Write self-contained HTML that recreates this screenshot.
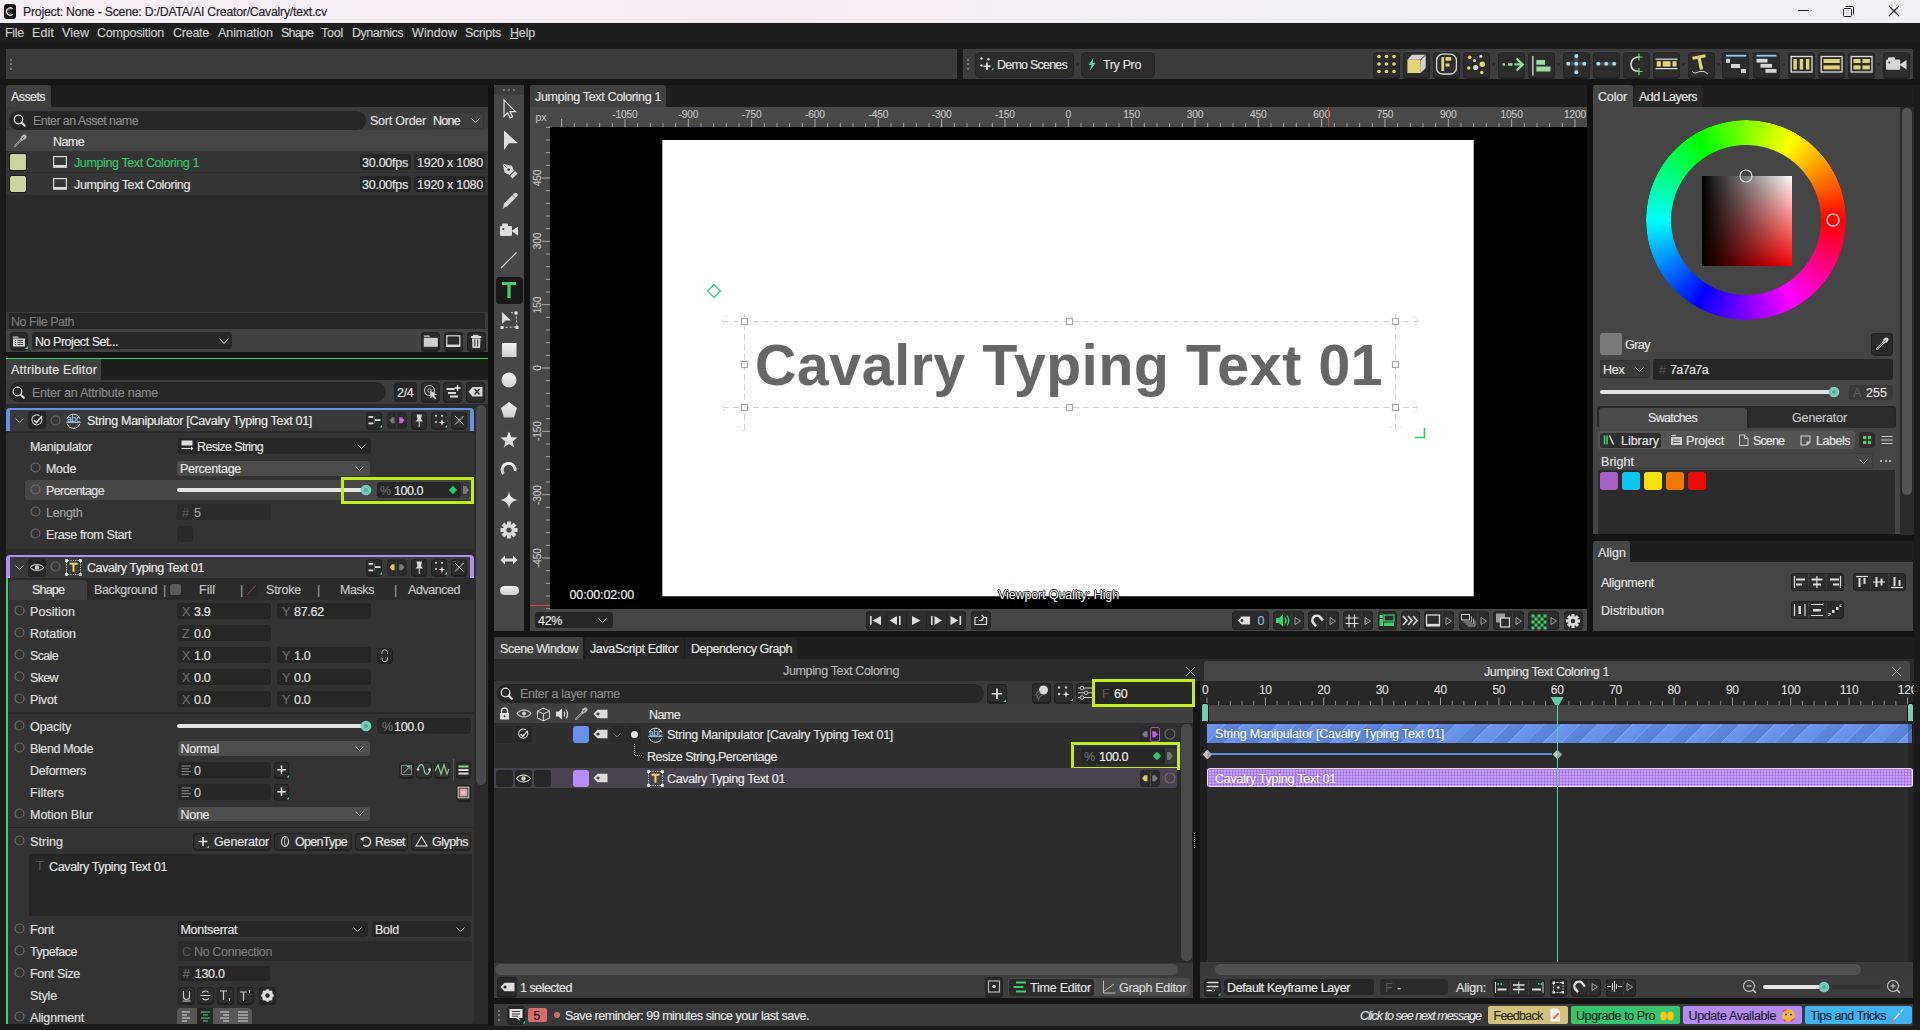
<!DOCTYPE html>
<html><head><meta charset="utf-8">
<style>
*{box-sizing:border-box}
html,body{margin:0;padding:0}
body{width:1920px;height:1030px;overflow:hidden;position:relative;background:#1b1b1b;font-family:"Liberation Sans",sans-serif;font-size:12.5px;letter-spacing:-0.3px;color:#dedede}
.a{position:absolute}
.t{position:absolute;white-space:nowrap;line-height:14px;height:14px;-webkit-text-stroke:0.15px currentColor}
.fld{position:absolute;background:#262626;border-radius:3px}
.btn{position:absolute;background:#2c2c2c;border:1px solid #222;border-radius:4px}
.dim{color:#8a8a8a}
svg{position:absolute;overflow:visible}
</style></head><body>

<!-- 01_base.py -->
<!-- TITLE BAR -->
<div class="a" style="left:0;top:0;width:1920px;height:23px;background:linear-gradient(90deg,#f4eef4 0%,#f6ebf4 40%,#f2eff6 70%,#f1f0f6 100%)"></div>
<div id="titlebar"></div>

<!-- MENU BAR -->
<div class="a" style="left:0;top:23px;width:1920px;height:19px;background:#1f1f1f"></div><div class="a" style="left:0;top:42px;width:1920px;height:7px;background:#1c1c1c"></div><div class="a" style="left:0;top:79px;width:1920px;height:6px;background:#151515"></div>
<div id="menubar"></div>

<!-- TOOLBARS -->
<div class="a" style="left:6px;top:49px;width:951px;height:30px;background:#3c3c3c"></div>
<div class="a" style="left:963px;top:49px;width:950px;height:30px;background:#3c3c3c"></div>
<div id="toolbar"></div>

<!-- LEFT PANEL: ASSETS -->
<div class="a" style="left:6px;top:85px;width:482px;height:267px;background:#1e1e1e"></div>
<div class="a" style="left:6px;top:85px;width:45px;height:22px;background:#404040;border-radius:3px 3px 0 0"></div>
<div class="a" style="left:6px;top:107px;width:482px;height:245px;background:#2b2b2b"></div>
<div id="assets"></div>

<div class="a" style="left:6px;top:352px;width:482px;height:6px;background:#131313"></div>
<!-- LEFT PANEL: ATTRIBUTE EDITOR -->
<div class="a" style="left:6px;top:358px;width:482px;height:2px;background:#3ecf6e"></div>
<div class="a" style="left:6px;top:359px;width:482px;height:665px;background:#1e1e1e"></div>
<div class="a" style="left:6px;top:359px;width:95px;height:21px;background:#3f3f3f"></div>
<div class="a" style="left:6px;top:380px;width:482px;height:644px;background:#2b2b2b"></div>
<div id="attr"></div>

<!-- TOOL STRIP -->
<div class="a" style="left:494px;top:85px;width:30px;height:546px;background:#474747"></div>
<div class="a" style="left:494px;top:85px;width:30px;height:10px;background:#3d3d3d"></div>
<div id="tools"></div>

<!-- VIEWPORT -->
<div class="a" style="left:530px;top:85px;width:1057px;height:546px;background:#1e1e1e"></div>
<div class="a" style="left:530px;top:85px;width:136px;height:22px;background:#404040;border-radius:3px 3px 0 0"></div>
<div class="a" style="left:530px;top:107px;width:1057px;height:20px;background:#484848"></div>
<div class="a" style="left:530px;top:107px;width:20px;height:502px;background:#484848"></div>
<div class="a" style="left:550px;top:127px;width:1037px;height:482px;background:#000"></div>
<div class="a" style="left:662px;top:140px;width:812px;height:456px;background:#fff;box-shadow:inset 1px 0 0 #a8a8a8, inset -1px 0 0 #b8b8b8"></div><div class="a" style="left:662px;top:596px;width:812px;height:1px;background:#404040"></div>
<div class="a" style="left:530px;top:609px;width:1057px;height:22px;background:#474747"></div>
<div id="viewport"></div>

<!-- RIGHT PANEL -->
<div class="a" style="left:1593px;top:85px;width:320px;height:449px;background:#1e1e1e"></div>
<div class="a" style="left:1593px;top:85px;width:40px;height:22px;background:#454545;border-radius:3px 3px 0 0"></div>
<div class="a" style="left:1634px;top:85px;width:69px;height:22px;background:#262626;border-radius:3px 3px 0 0"></div>
<div class="a" style="left:1593px;top:107px;width:320px;height:427px;background:#454545"></div>
<div id="color"></div>
<div class="a" style="left:1593px;top:541px;width:320px;height:90px;background:#1e1e1e"></div>
<div class="a" style="left:1593px;top:541px;width:37px;height:21px;background:#454545;border-radius:3px 3px 0 0"></div>
<div class="a" style="left:1593px;top:562px;width:320px;height:69px;background:#454545"></div>
<div id="align"></div>

<!-- SCENE WINDOW -->
<div class="a" style="left:494px;top:637px;width:1420px;height:22px;background:#1e1e1e"></div><div class="a" style="left:494px;top:659px;width:1420px;height:22px;background:#2b2b2b"></div>
<div class="a" style="left:494px;top:637px;width:89px;height:22px;background:#3f3f3f;border-radius:3px 3px 0 0"></div>

<div class="a" style="left:494px;top:681px;width:699px;height:23px;background:#3a3a3a"></div>
<div class="a" style="left:494px;top:704px;width:699px;height:19px;background:#404040"></div>
<div class="a" style="left:494px;top:723px;width:699px;height:240px;background:#2b2b2b"></div>
<div class="a" style="left:494px;top:963px;width:699px;height:13px;background:#3a3a3a"></div>
<div class="a" style="left:494px;top:976px;width:699px;height:22px;background:#3c3c3c"></div>
<div id="scene"></div>

<!-- TIMELINE -->

<div class="a" style="left:1204px;top:661px;width:706px;height:20px;background:#454545;border-radius:4px 4px 0 0"></div>
<div class="a" style="left:1200px;top:681px;width:713px;height:24px;background:#262626"></div>
<div class="a" style="left:1200px;top:705px;width:714px;height:16px;background:#1f1f1f"></div><div class="a" style="left:1207px;top:705px;width:700px;height:16px;background:#464646"></div>
<div class="a" style="left:1207px;top:721px;width:706px;height:241px;background:#2b2b2b"></div>
<div class="a" style="left:1200px;top:962px;width:713px;height:14px;background:#3a3a3a"></div>
<div class="a" style="left:1200px;top:976px;width:713px;height:22px;background:#3c3c3c"></div>
<div id="timeline"></div>

<div class="a" style="left:494px;top:998px;width:1420px;height:6px;background:#141414"></div>
<div class="a" style="left:1593px;top:534px;width:321px;height:7px;background:#141414"></div>
<div class="a" style="left:488px;top:85px;width:6px;height:941px;background:#121212"></div>
<div class="a" style="left:524px;top:85px;width:6px;height:546px;background:#121212"></div>
<div class="a" style="left:1587px;top:85px;width:6px;height:546px;background:#121212"></div>
<div class="a" style="left:494px;top:631px;width:1420px;height:6px;background:#141414"></div>
<div class="a" style="left:1193px;top:681px;width:7px;height:317px;background:#161616"></div>
<!-- STATUS BAR -->
<div class="a" style="left:494px;top:1004px;width:1419px;height:22px;background:#3a3a3a"></div>
<div id="status"></div>


<!-- 10_title.py -->
<div class="a" style="left:4px;top:4px;width:12px;height:15px;background:#111;border-radius:3px;"></div>
<svg style="left:4px;top:4px;" width="12" height="15" viewBox="0 0 12 15"><path d="M8.6 4.8 A3.6 3.6 0 1 0 8.6 10.2" fill="none" stroke="#ddd" stroke-width="1.3"/><path d="M7.6 6.2 A1.9 1.9 0 1 0 7.6 8.8" fill="none" stroke="#888" stroke-width="0.8"/></svg>
<div class="t" style="left:23px;top:5px;font-size:12.3px;color:#1c1c1c;letter-spacing:-0.235px;">Project: None - Scene: D:/DATA/AI Creator/Cavalry/text.cv</div>
<div class="a" style="left:1798px;top:10px;width:11px;height:1px;background:#222;"></div>
<svg style="left:1840px;top:3px;" width="16" height="16" viewBox="0 0 16 16"><rect x="3.5" y="5.5" width="8" height="8" rx="1" fill="none" stroke="#222" stroke-width="1"/><path d="M5.5 3.5 H12.5 A1 1 0 0 1 13.5 4.5 V11.5" fill="none" stroke="#222" stroke-width="1"/></svg>
<svg style="left:1886px;top:3px;" width="16" height="16" viewBox="0 0 16 16"><path d="M3 3 L13 13 M13 3 L3 13" stroke="#222" stroke-width="1.2"/></svg>
<!-- 11_menu.py -->
<div class="t" style="left:5px;top:26px;font-size:12.5px;color:#cfcfcf;letter-spacing:-0.285px;">File</div>
<div class="t" style="left:32px;top:26px;font-size:12.5px;color:#cfcfcf;letter-spacing:0.115px;">Edit</div>
<div class="t" style="left:62px;top:26px;font-size:12.5px;color:#cfcfcf;letter-spacing:0.033px;">View</div>
<div class="t" style="left:97px;top:26px;font-size:12.5px;color:#cfcfcf;letter-spacing:-0.225px;">Composition</div>
<div class="t" style="left:173px;top:26px;font-size:12.5px;color:#cfcfcf;letter-spacing:-0.253px;">Create</div>
<div class="t" style="left:218px;top:26px;font-size:12.5px;color:#cfcfcf;letter-spacing:-0.065px;">Animation</div>
<div class="t" style="left:281px;top:26px;font-size:12.5px;color:#cfcfcf;letter-spacing:-0.829px;">Shape</div>
<div class="t" style="left:321px;top:26px;font-size:12.5px;color:#cfcfcf;letter-spacing:-0.232px;">Tool</div>
<div class="t" style="left:352px;top:26px;font-size:12.5px;color:#cfcfcf;letter-spacing:-0.484px;">Dynamics</div>
<div class="t" style="left:412px;top:26px;font-size:12.5px;color:#cfcfcf;letter-spacing:0.09px;">Window</div>
<div class="t" style="left:465px;top:26px;font-size:12.5px;color:#cfcfcf;letter-spacing:-0.314px;">Scripts</div>
<div class="t" style="left:510px;top:26px;font-size:12.5px;color:#cfcfcf;letter-spacing:-0.177px;">Help</div>
<div class="a" style="left:510px;top:38px;width:8px;height:1px;background:#cfcfcf;"></div>
<!-- 12_toolbar.py -->
<div class="a" style="left:10px;top:58.5px;width:2px;height:2px;background:#8a8a8a;border-radius:1px;"></div>
<div class="a" style="left:967px;top:58.5px;width:2px;height:2px;background:#8a8a8a;border-radius:1px;"></div>
<div class="a" style="left:10px;top:63px;width:2px;height:2px;background:#8a8a8a;border-radius:1px;"></div>
<div class="a" style="left:967px;top:63px;width:2px;height:2px;background:#8a8a8a;border-radius:1px;"></div>
<div class="a" style="left:10px;top:67.5px;width:2px;height:2px;background:#8a8a8a;border-radius:1px;"></div>
<div class="a" style="left:967px;top:67.5px;width:2px;height:2px;background:#8a8a8a;border-radius:1px;"></div>
<div class="a" style="left:974.5px;top:51px;width:99px;height:27px;background:#2c2c2c;border-radius:5px;border-top:1px solid #4a4a4a;box-shadow:inset 0 0 0 1px #252525;"></div>
<svg style="left:979px;top:56px;" width="16" height="18" viewBox="0 0 16 18"><circle cx="2.5" cy="2.5" r="1.2" fill="#ddd"/><circle cx="9.5" cy="3.2" r="1.2" fill="#ddd"/><circle cx="2.5" cy="9.5" r="1.2" fill="#ddd"/><path d="M8 6.5 V14 M4.5 10.2 H11.5" stroke="#eee" stroke-width="1.6"/><path d="M12 14 L14.5 11.5 V14 Z" fill="#5ec9a9"/></svg>
<div class="t" style="left:997px;top:58px;font-size:12.5px;color:#e0e0e0;letter-spacing:-0.773px;">Demo Scenes</div>
<div class="a" style="left:1076px;top:63px;width:3px;height:3px;background:#2a2a2a;border-radius:2px;"></div>
<div class="a" style="left:1081px;top:51px;width:74px;height:27px;background:#2c2c2c;border-radius:5px;border-top:1px solid #4a4a4a;box-shadow:inset 0 0 0 1px #252525;"></div>
<svg style="left:1087px;top:57px;" width="10" height="16" viewBox="0 0 10 16"><path d="M6.5 0.5 L1.5 8 H4.5 L2.5 14.5 L8.5 6 H5.5 Z" fill="#5ec9a9"/></svg>
<div class="t" style="left:1103px;top:58px;font-size:12.5px;color:#e0e0e0;letter-spacing:-0.358px;">Try Pro</div>
<div class="a" style="left:1372.5px;top:51px;width:27px;height:27px;background:#2c2c2c;border-radius:4px;border-top:1px solid #4a4a4a;box-shadow:0 1px 0 #1f1f1f, inset 0 0 0 1px #252525;"></div>
<div class="a" style="left:1402.5px;top:51px;width:27px;height:27px;background:#2c2c2c;border-radius:4px;border-top:1px solid #4a4a4a;box-shadow:0 1px 0 #1f1f1f, inset 0 0 0 1px #252525;"></div>
<div class="a" style="left:1432.5px;top:51px;width:27px;height:27px;background:#2c2c2c;border-radius:4px;border-top:1px solid #4a4a4a;box-shadow:0 1px 0 #1f1f1f, inset 0 0 0 1px #252525;"></div>
<div class="a" style="left:1462.5px;top:51px;width:27px;height:27px;background:#2c2c2c;border-radius:4px;border-top:1px solid #4a4a4a;box-shadow:0 1px 0 #1f1f1f, inset 0 0 0 1px #252525;"></div>
<div class="a" style="left:1497.5px;top:51px;width:27px;height:27px;background:#2c2c2c;border-radius:4px;border-top:1px solid #4a4a4a;box-shadow:0 1px 0 #1f1f1f, inset 0 0 0 1px #252525;"></div>
<div class="a" style="left:1527.5px;top:51px;width:27px;height:27px;background:#2c2c2c;border-radius:4px;border-top:1px solid #4a4a4a;box-shadow:0 1px 0 #1f1f1f, inset 0 0 0 1px #252525;"></div>
<div class="a" style="left:1562.5px;top:51px;width:27px;height:27px;background:#2c2c2c;border-radius:4px;border-top:1px solid #4a4a4a;box-shadow:0 1px 0 #1f1f1f, inset 0 0 0 1px #252525;"></div>
<div class="a" style="left:1592.5px;top:51px;width:27px;height:27px;background:#2c2c2c;border-radius:4px;border-top:1px solid #4a4a4a;box-shadow:0 1px 0 #1f1f1f, inset 0 0 0 1px #252525;"></div>
<div class="a" style="left:1622.5px;top:51px;width:27px;height:27px;background:#2c2c2c;border-radius:4px;border-top:1px solid #4a4a4a;box-shadow:0 1px 0 #1f1f1f, inset 0 0 0 1px #252525;"></div>
<div class="a" style="left:1652.5px;top:51px;width:27px;height:27px;background:#2c2c2c;border-radius:4px;border-top:1px solid #4a4a4a;box-shadow:0 1px 0 #1f1f1f, inset 0 0 0 1px #252525;"></div>
<div class="a" style="left:1687.5px;top:51px;width:27px;height:27px;background:#2c2c2c;border-radius:4px;border-top:1px solid #4a4a4a;box-shadow:0 1px 0 #1f1f1f, inset 0 0 0 1px #252525;"></div>
<div class="a" style="left:1722px;top:51px;width:27px;height:27px;background:#2c2c2c;border-radius:4px;border-top:1px solid #4a4a4a;box-shadow:0 1px 0 #1f1f1f, inset 0 0 0 1px #252525;"></div>
<div class="a" style="left:1752.5px;top:51px;width:27px;height:27px;background:#2c2c2c;border-radius:4px;border-top:1px solid #4a4a4a;box-shadow:0 1px 0 #1f1f1f, inset 0 0 0 1px #252525;"></div>
<div class="a" style="left:1787.5px;top:51px;width:27px;height:27px;background:#2c2c2c;border-radius:4px;border-top:1px solid #4a4a4a;box-shadow:0 1px 0 #1f1f1f, inset 0 0 0 1px #252525;"></div>
<div class="a" style="left:1817.5px;top:51px;width:27px;height:27px;background:#2c2c2c;border-radius:4px;border-top:1px solid #4a4a4a;box-shadow:0 1px 0 #1f1f1f, inset 0 0 0 1px #252525;"></div>
<div class="a" style="left:1847.5px;top:51px;width:27px;height:27px;background:#2c2c2c;border-radius:4px;border-top:1px solid #4a4a4a;box-shadow:0 1px 0 #1f1f1f, inset 0 0 0 1px #252525;"></div>
<div class="a" style="left:1882.5px;top:51px;width:27px;height:27px;background:#2c2c2c;border-radius:4px;border-top:1px solid #4a4a4a;box-shadow:0 1px 0 #1f1f1f, inset 0 0 0 1px #252525;"></div>
<div class="a" style="left:1492px;top:63px;width:3px;height:3px;background:#2a2a2a;border-radius:2px;"></div>
<div class="a" style="left:1556.8px;top:63px;width:3px;height:3px;background:#2a2a2a;border-radius:2px;"></div>
<div class="a" style="left:1681.5px;top:63px;width:3px;height:3px;background:#2a2a2a;border-radius:2px;"></div>
<div class="a" style="left:1716.5px;top:63px;width:3px;height:3px;background:#2a2a2a;border-radius:2px;"></div>
<div class="a" style="left:1781.5px;top:63px;width:3px;height:3px;background:#2a2a2a;border-radius:2px;"></div>
<div class="a" style="left:1877.1px;top:63px;width:3px;height:3px;background:#2a2a2a;border-radius:2px;"></div>
<svg style="left:1372.5px;top:51px;" width="27" height="27" viewBox="0 0 27 27"><circle cx="6" cy="5.5" r="1.8" fill="#e3d574"/><circle cx="6" cy="13" r="1.8" fill="#e3d574"/><circle cx="6" cy="20.5" r="1.8" fill="#e3d574"/><circle cx="13.5" cy="5.5" r="1.8" fill="#e3d574"/><circle cx="13.5" cy="13" r="1.8" fill="#e3d574"/><circle cx="13.5" cy="20.5" r="1.8" fill="#e3d574"/><circle cx="21" cy="5.5" r="1.8" fill="#e3d574"/><circle cx="21" cy="13" r="1.8" fill="#e3d574"/><circle cx="21" cy="20.5" r="1.8" fill="#e3d574"/></svg>
<svg style="left:1402.5px;top:51px;" width="27" height="27" viewBox="0 0 27 27"><path d="M4.4 8.8 L9 3.8 H22.7 L17.6 8.8 Z" fill="#d4d4d4"/><path d="M17.6 8.8 L22.7 3.8 V17 L17.6 22 Z" fill="#d4d4d4"/><rect x="4.4" y="8.8" width="13.2" height="13.2" fill="#e3d574"/><path d="M17.6 8.8 L22.7 3.8" stroke="#2c2c2c" stroke-width="0.8"/></svg>
<svg style="left:1432.5px;top:51px;" width="27" height="27" viewBox="0 0 27 27"><rect x="3.6" y="3.2" width="19.8" height="19.8" rx="6" fill="none" stroke="#d6d6d6" stroke-width="1.3"/><rect x="8.4" y="6.1" width="2.7" height="13.9" fill="#e3d574"/><rect x="12.5" y="6.1" width="5.7" height="3.6" fill="#e3d574"/><rect x="12.5" y="12.5" width="4" height="3" fill="#e3d574"/></svg>
<svg style="left:1462.5px;top:51px;" width="27" height="27" viewBox="0 0 27 27"><circle cx="6.7" cy="6.3" r="1.7" fill="#e3d574"/><circle cx="5.8" cy="17" r="1.7" fill="#e3d574"/><circle cx="19.3" cy="13.3" r="2.7" fill="#e3d574"/><circle cx="18.8" cy="21.5" r="1.7" fill="#e3d574"/><circle cx="17.8" cy="5.2" r="1.5" fill="#d8d8d8"/><circle cx="11.5" cy="9.5" r="1.6" fill="#d8d8d8"/><circle cx="12.7" cy="16.5" r="2.6" fill="#d8d8d8"/></svg>
<svg style="left:1497.5px;top:51px;" width="27" height="27" viewBox="0 0 27 27"><rect x="4.5" y="12.2" width="2.5" height="2.5" fill="#8fd89a"/><rect x="10" y="12.2" width="4.5" height="2.5" fill="#8fd89a"/><path d="M16.5 13.45 H24.5 M18.5 7.5 L24.8 13.45 L18.5 19.5" fill="none" stroke="#8fd89a" stroke-width="2.3"/></svg>
<svg style="left:1527.5px;top:51px;" width="27" height="27" viewBox="0 0 27 27"><rect x="4.2" y="5" width="1.3" height="19.5" fill="#ddd"/><rect x="8.3" y="9" width="8.7" height="4.8" fill="#9bdb9b"/><rect x="8.3" y="15.5" width="14.2" height="5" fill="#9bdb9b"/></svg>
<svg style="left:1562.5px;top:51px;" width="27" height="27" viewBox="0 0 27 27"><path d="M13.3 5 V21 M5.2 12.8 H21.3" stroke="#4a4a4a" stroke-width="3.5"/><circle cx="13.3" cy="4.9" r="2" fill="#a8d8f8"/><circle cx="5.2" cy="12.8" r="2" fill="#a8d8f8"/><circle cx="13.3" cy="12.8" r="2" fill="#a8d8f8"/><circle cx="21.3" cy="12.8" r="2" fill="#a8d8f8"/><circle cx="13.3" cy="21.2" r="2" fill="#a8d8f8"/></svg>
<svg style="left:1592.5px;top:51px;" width="27" height="27" viewBox="0 0 27 27"><path d="M5.2 12.8 H21.3" stroke="#4a4a4a" stroke-width="3.5"/><circle cx="5.2" cy="12.8" r="2" fill="#a8d8f8"/><circle cx="13.2" cy="12.8" r="2" fill="#a8d8f8"/><circle cx="21.2" cy="12.8" r="2" fill="#a8d8f8"/></svg>
<svg style="left:1622.5px;top:51px;" width="27" height="27" viewBox="0 0 27 27"><path d="M16.5 6 C10 6 8 10 8 13.3 C8 17 10 20.5 16.5 20.5" fill="none" stroke="#d8d8d8" stroke-width="1.6"/><path d="M16 2.5 V9.5 M13 6 H19.5 M16 17 V24 M13 20.5 H19.5" stroke="#7cc98a" stroke-width="1.2"/></svg>
<svg style="left:1652.5px;top:51px;" width="27" height="27" viewBox="0 0 27 27"><rect x="2.6" y="7.6" width="21.9" height="1.2" fill="#ddd"/><rect x="2.6" y="17" width="21.9" height="1.2" fill="#ddd"/><rect x="3.8" y="10.2" width="4" height="5.4" fill="#e3d574"/><rect x="9.7" y="10.2" width="7.8" height="5.4" fill="#e3d574"/><rect x="19.5" y="10.2" width="4" height="5.4" fill="#e3d574"/></svg>
<svg style="left:1687.5px;top:51px;" width="27" height="27" viewBox="0 0 27 27"><path d="M4.5 7.2 L17.5 4.8" stroke="#e3d574" stroke-width="3.2"/><path d="M10.8 6.2 L13.6 18.5" stroke="#e3d574" stroke-width="3.3"/><path d="M4.3 20.5 C7 23.5 9 21 12 20.5 C15 20 17 20.5 19.8 23" fill="none" stroke="#ddd" stroke-width="1"/></svg>
<svg style="left:1722px;top:51px;" width="27" height="27" viewBox="0 0 27 27"><rect x="3.9" y="3.8" width="20.3" height="1.8" fill="#8fd0f5"/><rect x="4" y="7.8" width="4" height="4" fill="#d4d4d4"/><rect x="9" y="13" width="9" height="4" fill="#d4d4d4"/><rect x="19" y="18" width="5" height="4" fill="#d4d4d4"/></svg>
<svg style="left:1752.5px;top:51px;" width="27" height="27" viewBox="0 0 27 27"><rect x="3.5" y="3.8" width="20" height="1.8" fill="#8fd0f5"/><rect x="3.5" y="7.8" width="11" height="3.8" fill="#d4d4d4"/><rect x="7.5" y="12.9" width="11.5" height="3.8" fill="#d4d4d4"/><rect x="12.5" y="18" width="11" height="3.8" fill="#d4d4d4"/></svg>
<svg style="left:1787.5px;top:51px;" width="27" height="27" viewBox="0 0 27 27"><rect x="3.2" y="5.5" width="20.8" height="15.5" fill="none" stroke="#ddd" stroke-width="1.3"/><rect x="5.4" y="8" width="3.4" height="10.5" fill="#e3d574"/><rect x="11.7" y="8" width="3.4" height="10.5" fill="#e3d574"/><rect x="18" y="8" width="3.4" height="10.5" fill="#e3d574"/></svg>
<svg style="left:1817.5px;top:51px;" width="27" height="27" viewBox="0 0 27 27"><rect x="3.2" y="5.5" width="20.8" height="15.5" fill="none" stroke="#ddd" stroke-width="1.3"/><rect x="5.5" y="8" width="16.3" height="4" fill="#e3d574"/><rect x="5.5" y="14.4" width="16.3" height="4" fill="#e3d574"/></svg>
<svg style="left:1847.5px;top:51px;" width="27" height="27" viewBox="0 0 27 27"><rect x="3.2" y="5.5" width="20.8" height="15.5" fill="none" stroke="#ddd" stroke-width="1.3"/><rect x="5.5" y="8" width="7" height="4" fill="#e3d574"/><rect x="14.5" y="8" width="7.3" height="4" fill="#e3d574"/><rect x="5.5" y="14.4" width="7" height="4" fill="#e3d574"/><rect x="14.5" y="14.4" width="7.3" height="4" fill="#e3d574"/></svg>
<svg style="left:1882.5px;top:51px;" width="27" height="27" viewBox="0 0 27 27"><rect x="3" y="8.6" width="14.2" height="10.2" rx="1" fill="#d8d8d8"/><rect x="5" y="6.2" width="7" height="3" rx="1" fill="#d8d8d8"/><path d="M16.5 13.7 L23.5 9 V18.4 Z" fill="#d8d8d8"/><circle cx="6.3" cy="11.6" r="1" fill="#333"/></svg>
<!-- 20_assets.py -->
<div class="t" style="left:11px;top:89.5px;font-size:12.5px;color:#e6e6e6;letter-spacing:-0.585px;">Assets</div>
<div class="a" style="left:6px;top:107px;width:482px;height:23px;background:#3c3c3c;"></div>
<div class="a" style="left:9px;top:111px;width:357px;height:19px;background:#262626;border-radius:10px 10px 10px 10px;"></div>
<svg style="left:13px;top:114px;" width="14" height="14" viewBox="0 0 14 14"><g transform="scale(1)"><circle cx="5.5" cy="5.5" r="4.3" fill="none" stroke="#e0e0e0" stroke-width="1.3"/><path d="M8.7 8.7 L11.8 11.8" stroke="#e0e0e0" stroke-width="2" stroke-linecap="round"/></g></svg>
<div class="t" style="left:33px;top:114px;font-size:12.5px;color:#8a8a8a;letter-spacing:-0.581px;">Enter an Asset name</div>
<div class="t" style="left:370px;top:114px;font-size:12.5px;color:#e0e0e0;letter-spacing:-0.235px;">Sort Order</div>
<div class="a" style="left:430px;top:112px;width:54px;height:17px;background:#3e3e3e;border-radius:3px;box-shadow:inset 0 0 0 1px #353535;"></div>
<div class="t" style="left:433px;top:114px;font-size:12.5px;color:#e6e6e6;letter-spacing:-0.72px;">None</div>
<svg style="left:471px;top:118px;" width="9" height="5" viewBox="0 0 9 5"><path d="M0.5 0.5 L4.5 4.5 L8.5 0.5" fill="none" stroke="#cfcfcf" stroke-width="1"/></svg>
<div class="a" style="left:6px;top:130px;width:482px;height:21px;background:#454545;"></div>
<svg style="left:13px;top:134px;" width="14" height="14" viewBox="0 0 14 14"><path d="M2 12 L8.5 5.5" stroke="#aaa" stroke-width="1.8" stroke-linecap="round"/><path d="M2 12 L8.5 5.5" stroke="#454545" stroke-width="0.6"/><path d="M7.5 4.5 L9.5 6.5 M8.5 3.5 L11 1.5 A1.2 1.2 0 0 1 12.5 3 L10.5 5.5" stroke="#bbb" stroke-width="2" fill="none"/></svg>
<div class="t" style="left:53px;top:135px;font-size:12.5px;color:#e8e8e8;letter-spacing:-0.585px;">Name</div>
<div class="a" style="left:6px;top:151px;width:482px;height:22px;background:#353535;"></div>
<div class="a" style="left:10px;top:154px;width:16px;height:16px;background:#cad3a1;border-radius:2px;box-shadow:0 0 0 1px #1a1a1a;"></div>
<svg style="left:53px;top:156px;" width="14" height="12" viewBox="0 0 14 12"><rect x="0.6" y="0.6" width="12.8" height="9" fill="none" stroke="#dcdcdc" stroke-width="1.2"/><rect x="0" y="9.5" width="14" height="2.3" fill="#dcdcdc"/></svg>
<div class="t" style="left:74px;top:156px;font-size:12.5px;color:#3dc46e;letter-spacing:-0.385px;">Jumping Text Coloring 1</div>
<div class="a" style="left:360px;top:154px;width:51px;height:16px;background:#262626;border-radius:3px;"></div>
<div class="t" style="left:362px;top:155.5px;font-size:12.5px;color:#e6e6e6;letter-spacing:-0.244px;">30.00fps</div>
<div class="a" style="left:414px;top:154px;width:71px;height:16px;background:#262626;border-radius:3px;"></div>
<div class="t" style="left:417px;top:155.5px;font-size:12.5px;color:#e6e6e6;letter-spacing:-0.255px;">1920 x 1080</div>
<div class="a" style="left:6px;top:173px;width:482px;height:22px;background:#353535;"></div>
<div class="a" style="left:10px;top:176px;width:16px;height:16px;background:#cad3a1;border-radius:2px;box-shadow:0 0 0 1px #1a1a1a;"></div>
<svg style="left:53px;top:178px;" width="14" height="12" viewBox="0 0 14 12"><rect x="0.6" y="0.6" width="12.8" height="9" fill="none" stroke="#dcdcdc" stroke-width="1.2"/><rect x="0" y="9.5" width="14" height="2.3" fill="#dcdcdc"/></svg>
<div class="t" style="left:74px;top:178px;font-size:12.5px;color:#e4e4e4;letter-spacing:-0.354px;">Jumping Text Coloring</div>
<div class="a" style="left:360px;top:176px;width:51px;height:16px;background:#262626;border-radius:3px;"></div>
<div class="t" style="left:362px;top:177.5px;font-size:12.5px;color:#e6e6e6;letter-spacing:-0.244px;">30.00fps</div>
<div class="a" style="left:414px;top:176px;width:71px;height:16px;background:#262626;border-radius:3px;"></div>
<div class="t" style="left:417px;top:177.5px;font-size:12.5px;color:#e6e6e6;letter-spacing:-0.255px;">1920 x 1080</div>
<div class="a" style="left:6px;top:172px;width:482px;height:1px;background:#2f2f2f;"></div>
<div class="a" style="left:6px;top:312px;width:482px;height:40px;background:#3a3a3a;"></div>
<div class="a" style="left:9px;top:313px;width:476px;height:16px;background:#262626;"></div>
<div class="t" style="left:11px;top:314.5px;font-size:12.5px;color:#7c7c7c;letter-spacing:-0.481px;">No File Path</div>
<div class="a" style="left:6px;top:329px;width:482px;height:23px;background:#434343;"></div>
<div class="a" style="left:10px;top:332px;width:18px;height:18px;background:#2a2a2a;border-radius:4px;box-shadow:inset 0 0 0 1px #222, 0 1px 0 #222;"></div>
<svg style="left:12px;top:335px;" width="14" height="12" viewBox="0 0 14 12"><path d="M1 1.5 H6 L7 2.8 H1 Z" fill="#ccc"/><rect x="1" y="3.5" width="12" height="8" fill="#d0d0d0"/><path d="M3 5.5 H4 M5.5 5.5 H11 M3 7.5 H4 M5.5 7.5 H11 M3 9.5 H4 M5.5 9.5 H11" stroke="#333" stroke-width="0.9"/></svg>
<svg style="left:25px;top:346px;" width="3" height="3" viewBox="0 0 3 3"><path d="M0 3 L3 0 V3 Z" fill="#5ec9a9"/></svg>
<div class="a" style="left:32px;top:332px;width:200px;height:17px;background:#262626;border-radius:3px;"></div>
<div class="t" style="left:35px;top:334.5px;font-size:12.5px;color:#ececec;letter-spacing:-0.471px;">No Project Set...</div>
<svg style="left:219px;top:338px;" width="10" height="6" viewBox="0 0 10 6"><path d="M0.5 0.5 L5 5.5 L9.5 0.5" fill="none" stroke="#cfcfcf" stroke-width="1"/></svg>
<div class="a" style="left:420.5px;top:331.5px;width:19px;height:19px;background:#2a2a2a;border-radius:4px;box-shadow:inset 0 0 0 1px #222, 0 1px 0 #222;"></div>
<div class="a" style="left:443.5px;top:331.5px;width:19px;height:19px;background:#2a2a2a;border-radius:4px;box-shadow:inset 0 0 0 1px #222, 0 1px 0 #222;"></div>
<div class="a" style="left:466.5px;top:331.5px;width:19px;height:19px;background:#2a2a2a;border-radius:4px;box-shadow:inset 0 0 0 1px #222, 0 1px 0 #222;"></div>
<svg style="left:423px;top:334px;" width="14" height="14" viewBox="0 0 14 14"><path d="M0.8 1.5 H6 L7.2 2.8 H0.8 Z" fill="#ddd"/><rect x="0.8" y="3.8" width="14" height="9" fill="#cfcfcf"/></svg>
<svg style="left:446px;top:334px;" width="14" height="14" viewBox="0 0 14 14"><rect x="0.8" y="1.8" width="13" height="9.5" fill="none" stroke="#ddd" stroke-width="1.2"/><rect x="0.2" y="10.8" width="14.2" height="2.2" fill="#ddd"/></svg>
<svg style="left:469px;top:334px;" width="14" height="14" viewBox="0 0 14 14"><rect x="4" y="0.8" width="5.5" height="1.5" fill="#ccc"/><rect x="2.2" y="2" width="10" height="2" fill="#ddd"/><path d="M3 4.5 H11.5 L11 14 H3.5 Z" fill="#d6d6d6"/><path d="M5.8 5.5 V12.5 M8.7 5.5 V12.5" stroke="#2a2a2a" stroke-width="1"/></svg>
<!-- 21_attr.py -->
<div class="t" style="left:11px;top:363px;font-size:12.5px;color:#e6e6e6;letter-spacing:0.208px;">Attribute Editor</div>
<div class="a" style="left:6px;top:380px;width:482px;height:24px;background:#3c3c3c;"></div>
<div class="a" style="left:9px;top:382px;width:377px;height:20px;background:#262626;border-radius:10px;"></div>
<svg style="left:12px;top:386px;" width="14" height="14" viewBox="0 0 14 14"><g transform="scale(1)"><circle cx="5.5" cy="5.5" r="4.3" fill="none" stroke="#e0e0e0" stroke-width="1.3"/><path d="M8.7 8.7 L11.8 11.8" stroke="#e0e0e0" stroke-width="2" stroke-linecap="round"/></g></svg>
<div class="t" style="left:32px;top:386px;font-size:12.5px;color:#8a8a8a;letter-spacing:-0.231px;">Enter an Attribute name</div>
<div class="a" style="left:394px;top:382px;width:23px;height:19.5px;background:#262626;border-radius:3px;"></div>
<div class="t" style="left:397px;top:386px;color:#e6e6e6;">2/4</div>
<div class="a" style="left:420.5px;top:382px;width:19px;height:19.5px;background:#2c2c2c;border-radius:4px;box-shadow:inset 0 0 0 1px #222, 0 1px 0 #222;"></div>
<div class="a" style="left:443px;top:382px;width:19px;height:19.5px;background:#2c2c2c;border-radius:4px;box-shadow:inset 0 0 0 1px #222, 0 1px 0 #222;"></div>
<div class="a" style="left:465.5px;top:382px;width:19px;height:19.5px;background:#2c2c2c;border-radius:4px;box-shadow:inset 0 0 0 1px #222, 0 1px 0 #222;"></div>
<svg style="left:420.5px;top:382px;" width="19" height="19.5" viewBox="0 0 19 19.5"><circle cx="8.5" cy="8.5" r="5" fill="none" stroke="#bbb" stroke-width="1.1"/><circle cx="8.5" cy="8.5" r="1.8" fill="none" stroke="#bbb" stroke-width="1"/><path d="M9 8.5 L16 12.5 L13 13.5 L15.5 16.5 L14 17.5 L11.5 14.5 L9.5 16.5 Z" fill="#d0d0d0"/></svg>
<svg style="left:443px;top:382px;" width="19" height="19.5" viewBox="0 0 19 19.5"><rect x="3.5" y="6" width="8" height="2" fill="#ddd"/><rect x="5" y="10" width="8" height="2" fill="#ddd"/><rect x="7" y="13.5" width="8" height="2" fill="#ddd"/><path d="M14.5 3 V9 M11.5 6 H17.5" stroke="#eee" stroke-width="1.3"/></svg>
<svg style="left:465.5px;top:382px;" width="19" height="19.5" viewBox="0 0 19 19.5"><path d="M2.5 9.75 L6.5 5 H16.5 V14.5 H6.5 Z" fill="#d6d6d6"/><path d="M8.5 7 L13.5 12.5 M13.5 7 L8.5 12.5" stroke="#2a2a2a" stroke-width="1.5"/></svg>
<div class="a" style="left:476px;top:405px;width:10px;height:380px;background:#4a4a4a;border-radius:5px;"></div>
<div class="a" style="left:6px;top:408px;width:468px;height:23px;background:#6b8fe8;border-radius:4px 4px 0 0;"></div>
<div class="a" style="left:10px;top:410px;width:460px;height:21px;background:#393939;"></div>
<svg style="left:15px;top:418px;" width="9" height="5" viewBox="0 0 9 5"><path d="M0.5 0.5 L4.5 4.5 L8.5 0.5" fill="none" stroke="#aaa" stroke-width="1"/></svg>
<div class="a" style="left:28px;top:411px;width:18px;height:18px;background:#262626;border-radius:3px;"></div>
<svg style="left:28px;top:411px;" width="18" height="18" viewBox="0 0 18 18"><path d="M13.3 6.5 A5 5 0 1 1 11.5 4.6" fill="none" stroke="#ccc" stroke-width="1.1"/><path d="M6 9 L8.5 11.5 L14 5" fill="none" stroke="#ddd" stroke-width="1.6"/></svg>
<svg style="left:49.5px;top:414.9px;" width="11" height="11" viewBox="0 0 11 11"><circle cx="5.5" cy="5.5" r="4.5" fill="none" stroke="#666" stroke-width="1.2"/></svg>
<svg style="left:65px;top:412px;" width="17" height="17" viewBox="0 0 17 17"><path d="M2.2 6.5 A6.8 6.8 0 0 1 14.8 6.5" fill="none" stroke="#dcdcdc" stroke-width="1"/><path d="M2.2 12 A6.8 6.8 0 0 0 14.8 12" fill="none" stroke="#dcdcdc" stroke-width="1"/><text x="8.5" y="10.3" font-size="8.8" fill="#b0dcff" text-anchor="middle" font-family="Liberation Sans" letter-spacing="-0.4">abc</text><path d="M1.2 10.6 H15.8" stroke="#b0dcff" stroke-width="0.8"/></svg>
<div class="t" style="left:87px;top:414px;font-size:12.5px;color:#ececec;letter-spacing:-0.299px;">String Manipulator [Cavalry Typing Text 01]</div>
<div class="a" style="left:365.5px;top:412px;width:16.5px;height:16.5px;background:#2c2c2c;border-radius:4px;box-shadow:inset 0 0 0 1px #222, 0 1px 0 #222;"></div>
<svg style="left:365.5px;top:412px;" width="16.5" height="16.5" viewBox="0 0 16.5 16.5"><rect x="2.5" y="4" width="4.5" height="1.8" fill="#e0e0e0"/><rect x="2.5" y="10.5" width="4.5" height="1.8" fill="#e0e0e0"/><path d="M7 4.9 H8.5 V11.4 H7" fill="none" stroke="#777" stroke-width="0.8"/><rect x="9" y="7.2" width="5.5" height="1.8" fill="#e0e0e0"/><path d="M13.5 15.5 L16 13 V15.5 Z" fill="#5ec9a9"/></svg>
<div class="a" style="left:386.5px;top:412px;width:20px;height:16.5px;background:#2a2a2a;border-radius:4px;"></div>
<div class="a" style="left:396.3px;top:413px;width:0.7px;height:14.5px;background:#3a3a3a;"></div>
<svg style="left:386.5px;top:412px;" width="20" height="16.5" viewBox="0 0 20 16.5"><path d="M2.5 8.2 L5 5.2 H7.5 V11.2 H5 Z" fill="#7a7a7a"/><path d="M17.5 8.2 L15 5.2 H12.2 V11.2 H15 Z" fill="#c85ee8"/></svg>
<div class="a" style="left:410.5px;top:412px;width:16.5px;height:16.5px;background:#2c2c2c;border-radius:4px;box-shadow:inset 0 0 0 1px #222, 0 1px 0 #222;"></div>
<svg style="left:410.5px;top:412px;" width="16.5" height="16.5" viewBox="0 0 16.5 16.5"><path d="M5.5 2.5 H11 L10 7 L12 9.5 H4.5 L6.5 7 Z" fill="#d8d8d8"/><path d="M8.25 9.5 V15" stroke="#d8d8d8" stroke-width="1"/></svg>
<div class="a" style="left:430.5px;top:412px;width:16.5px;height:16.5px;background:#2c2c2c;border-radius:4px;box-shadow:inset 0 0 0 1px #222, 0 1px 0 #222;"></div>
<svg style="left:430.5px;top:412px;" width="16.5" height="16.5" viewBox="0 0 16.5 16.5"><circle cx="5" cy="3.8" r="1.1" fill="#ccc"/><circle cx="11" cy="3.8" r="1.1" fill="#ccc"/><circle cx="5" cy="10" r="1.1" fill="#ccc"/><path d="M11 7 L11.8 9.7 L14.3 10.5 L11.8 11.3 L11 14 L10.2 11.3 L7.7 10.5 L10.2 9.7 Z" fill="#eee"/><path d="M13.5 15.5 L16 13 V15.5 Z" fill="#5ec9a9"/></svg>
<div class="a" style="left:450.5px;top:412px;width:16.5px;height:16.5px;background:#2c2c2c;border-radius:4px;box-shadow:inset 0 0 0 1px #222, 0 1px 0 #222;"></div>
<svg style="left:450.5px;top:412px;" width="16.5" height="16.5" viewBox="0 0 16.5 16.5"><path d="M4 4 L12.5 12.5 M12.5 4 L4 12.5" stroke="#d8d8d8" stroke-width="1"/></svg>
<div class="a" style="left:6px;top:431px;width:468px;height:2px;background:#2a2a2a;"></div>
<div class="a" style="left:6px;top:433px;width:468px;height:116px;background:#333333;"></div>
<div class="t" style="left:30px;top:440px;color:#e0e0e0;">Manipulator</div>
<div class="a" style="left:178px;top:438px;width:193px;height:15.5px;background:#262626;border-radius:3px;"></div>
<svg style="left:181px;top:440px;" width="14" height="12" viewBox="0 0 14 12"><rect x="0.5" y="0.5" width="11" height="5" fill="#ddd"/><path d="M0.5 8.5 H10" stroke="#ddd" stroke-width="1.2"/><path d="M10 6.5 L12.5 8.5 L10 10.5 Z" fill="#ddd"/></svg>
<div class="t" style="left:197px;top:440px;font-size:12.5px;color:#e6e6e6;letter-spacing:-0.641px;">Resize String</div>
<svg style="left:357px;top:443.5px;" width="9" height="5" viewBox="0 0 9 5"><path d="M0.5 0.5 L4.5 4.5 L8.5 0.5" fill="none" stroke="#cfcfcf" stroke-width="1"/></svg>
<svg style="left:29.5px;top:462.4px;" width="11" height="11" viewBox="0 0 11 11"><circle cx="5.5" cy="5.5" r="4.5" fill="none" stroke="#6a6a6a" stroke-width="1.2"/></svg>
<div class="t" style="left:46px;top:462px;color:#e0e0e0;">Mode</div>
<div class="a" style="left:177px;top:461px;width:193px;height:14.5px;background:#4c4c4c;border-radius:3px;"></div>
<div class="t" style="left:180px;top:462.25px;color:#e6e6e6;">Percentage</div>
<svg style="left:355px;top:465.75px;" width="9" height="5" viewBox="0 0 9 5"><path d="M0.5 0.5 L4.5 4.5 L8.5 0.5" fill="none" stroke="#cfcfcf" stroke-width="1"/></svg>
<div class="a" style="left:25px;top:480px;width:449px;height:20px;background:#474747;border-radius:3px;"></div>
<svg style="left:29.5px;top:484.4px;" width="11" height="11" viewBox="0 0 11 11"><circle cx="5.5" cy="5.5" r="4.5" fill="none" stroke="#6a6a6a" stroke-width="1.2"/></svg>
<div class="t" style="left:46px;top:484px;font-size:12.5px;color:#e0e0e0;letter-spacing:-0.593px;">Percentage</div>
<div class="a" style="left:177px;top:488px;width:186px;height:4.2px;background:#e4e4e4;border-radius:2px;"></div>
<svg style="left:360px;top:484px;" width="12" height="12" viewBox="0 0 12 12"><circle cx="6" cy="6" r="5.3" fill="#76ccb4"/><circle cx="6" cy="6" r="2" fill="#5fa591"/></svg>
<div class="a" style="left:341px;top:477px;width:133px;height:26.5px;background:transparent;border-radius:0px;border:3.2px solid #c3ee1c;"></div>
<div class="a" style="left:377px;top:482px;width:84px;height:16px;background:#262626;border-radius:3px;"></div>
<div class="t" style="left:380px;top:484px;color:#6f6f6f;">%</div>
<div class="t" style="left:394px;top:484px;font-size:12.5px;color:#ececec;letter-spacing:-0.455px;">100.0</div>
<svg style="left:448px;top:485px;" width="10" height="10" viewBox="0 0 10 10"><path d="M5 0.8 L9.2 5 L5 9.2 L0.8 5 Z" fill="#2fc46e"/></svg>
<div class="a" style="left:461px;top:482px;width:10px;height:16px;background:#3a3a3a;border-radius:0 3px 3px 0;"></div>
<svg style="left:462px;top:485px;" width="8" height="10" viewBox="0 0 8 10"><path d="M1 1 H4 L7 5 L4 9 H1 Z" fill="#777"/></svg>
<svg style="left:29.5px;top:506.4px;" width="11" height="11" viewBox="0 0 11 11"><circle cx="5.5" cy="5.5" r="4.5" fill="none" stroke="#6a6a6a" stroke-width="1.2"/></svg>
<div class="t" style="left:46px;top:506px;color:#a6a6a6;">Length</div>
<div class="a" style="left:177px;top:504px;width:94px;height:16px;background:#2b2b2b;border-radius:3px;"></div>
<div class="t" style="left:182px;top:506px;color:#555;">#</div>
<div class="t" style="left:194px;top:506px;color:#a6a6a6;">5</div>
<svg style="left:29.5px;top:528.4px;" width="11" height="11" viewBox="0 0 11 11"><circle cx="5.5" cy="5.5" r="4.5" fill="none" stroke="#6a6a6a" stroke-width="1.2"/></svg>
<div class="t" style="left:46px;top:528px;font-size:12.5px;color:#e0e0e0;letter-spacing:-0.375px;">Erase from Start</div>
<div class="a" style="left:177px;top:526px;width:16px;height:15.5px;background:#292929;border-radius:3px;"></div>
<div class="a" style="left:6px;top:549px;width:468px;height:6px;background:#2b2b2b;"></div>
<div class="a" style="left:6px;top:555px;width:468px;height:23px;background:#b48ef2;border-radius:4px 4px 0 0;"></div>
<div class="a" style="left:10px;top:557px;width:460px;height:21px;background:#393939;"></div>
<svg style="left:15px;top:565px;" width="9" height="5" viewBox="0 0 9 5"><path d="M0.5 0.5 L4.5 4.5 L8.5 0.5" fill="none" stroke="#aaa" stroke-width="1"/></svg>
<div class="a" style="left:28px;top:558px;width:18px;height:19px;background:#262626;border-radius:3px;"></div>
<svg style="left:28px;top:558px;" width="18" height="19" viewBox="0 0 18 19"><path d="M2.5 9.5 C5 5.5 13 5.5 15.5 9.5 C13 13.5 5 13.5 2.5 9.5 Z" fill="none" stroke="#ccc" stroke-width="1.1"/><circle cx="9" cy="9.5" r="2.2" fill="#ccc"/></svg>
<svg style="left:49.5px;top:561.4px;" width="11" height="11" viewBox="0 0 11 11"><circle cx="5.5" cy="5.5" r="4.5" fill="none" stroke="#666" stroke-width="1.2"/></svg>
<svg style="left:65px;top:559px;" width="17" height="17" viewBox="0 0 17 17"><path d="M1.5 3 V14 M15.5 3 V14 M3 1.5 H14 M3 15.5 H14" stroke="#cfcfcf" stroke-width="1" stroke-dasharray="1.2 1.2"/><rect x="0.2" y="0.2" width="2.8" height="2.8" fill="#e6e6e6"/><rect x="14" y="0.2" width="2.8" height="2.8" fill="#e6e6e6"/><rect x="0.2" y="14" width="2.8" height="2.8" fill="#e6e6e6"/><rect x="14" y="14" width="2.8" height="2.8" fill="#e6e6e6"/><path d="M4.5 4.8 H12.5 M8.5 4.8 V12.8" stroke="#e8d56a" stroke-width="2"/></svg>
<div class="t" style="left:87px;top:561px;font-size:12.5px;color:#ececec;letter-spacing:-0.408px;">Cavalry Typing Text 01</div>
<div class="a" style="left:365.5px;top:559px;width:16.5px;height:16.5px;background:#2c2c2c;border-radius:4px;box-shadow:inset 0 0 0 1px #222, 0 1px 0 #222;"></div>
<svg style="left:365.5px;top:559px;" width="16.5" height="16.5" viewBox="0 0 16.5 16.5"><rect x="2.5" y="4" width="4.5" height="1.8" fill="#e0e0e0"/><rect x="2.5" y="10.5" width="4.5" height="1.8" fill="#e0e0e0"/><path d="M7 4.9 H8.5 V11.4 H7" fill="none" stroke="#777" stroke-width="0.8"/><rect x="9" y="7.2" width="5.5" height="1.8" fill="#e0e0e0"/><path d="M13.5 15.5 L16 13 V15.5 Z" fill="#5ec9a9"/></svg>
<div class="a" style="left:386.5px;top:559px;width:20px;height:16.5px;background:#2a2a2a;border-radius:4px;"></div>
<div class="a" style="left:396.3px;top:560px;width:0.7px;height:14.5px;background:#3a3a3a;"></div>
<svg style="left:386.5px;top:559px;" width="20" height="16.5" viewBox="0 0 20 16.5"><path d="M2.5 8.2 L5 5.2 H7.5 V11.2 H5 Z" fill="#e0c86a"/><path d="M17.5 8.2 L15 5.2 H12.2 V11.2 H15 Z" fill="#7a7a7a"/></svg>
<div class="a" style="left:410.5px;top:559px;width:16.5px;height:16.5px;background:#2c2c2c;border-radius:4px;box-shadow:inset 0 0 0 1px #222, 0 1px 0 #222;"></div>
<svg style="left:410.5px;top:559px;" width="16.5" height="16.5" viewBox="0 0 16.5 16.5"><path d="M5.5 2.5 H11 L10 7 L12 9.5 H4.5 L6.5 7 Z" fill="#d8d8d8"/><path d="M8.25 9.5 V15" stroke="#d8d8d8" stroke-width="1"/></svg>
<div class="a" style="left:430.5px;top:559px;width:16.5px;height:16.5px;background:#2c2c2c;border-radius:4px;box-shadow:inset 0 0 0 1px #222, 0 1px 0 #222;"></div>
<svg style="left:430.5px;top:559px;" width="16.5" height="16.5" viewBox="0 0 16.5 16.5"><circle cx="5" cy="3.8" r="1.1" fill="#ccc"/><circle cx="11" cy="3.8" r="1.1" fill="#ccc"/><circle cx="5" cy="10" r="1.1" fill="#ccc"/><path d="M11 7 L11.8 9.7 L14.3 10.5 L11.8 11.3 L11 14 L10.2 11.3 L7.7 10.5 L10.2 9.7 Z" fill="#eee"/><path d="M13.5 15.5 L16 13 V15.5 Z" fill="#5ec9a9"/></svg>
<div class="a" style="left:450.5px;top:559px;width:16.5px;height:16.5px;background:#2c2c2c;border-radius:4px;box-shadow:inset 0 0 0 1px #222, 0 1px 0 #222;"></div>
<svg style="left:450.5px;top:559px;" width="16.5" height="16.5" viewBox="0 0 16.5 16.5"><path d="M4 4 L12.5 12.5 M12.5 4 L4 12.5" stroke="#d8d8d8" stroke-width="1"/></svg>
<div class="a" style="left:6px;top:578px;width:1.5px;height:446px;background:#3ecf6e;"></div>
<div class="a" style="left:7.5px;top:578px;width:466.5px;height:22px;background:#2b2b2b;"></div>
<div class="a" style="left:9px;top:580px;width:78px;height:20px;background:#3f3f3f;border-radius:4px 4px 0 0;"></div>
<div class="t" style="left:32px;top:583px;font-size:12.5px;color:#e6e6e6;letter-spacing:-0.829px;">Shape</div>
<div class="t" style="left:94px;top:583px;font-size:12.5px;color:#c8c8c8;letter-spacing:-0.371px;">Background</div>
<div class="t" style="left:163px;top:583px;color:#999;">|</div>
<div class="a" style="left:170px;top:584px;width:11px;height:11px;background:#5a5a5a;border-radius:2px;box-shadow:0 0 0 1px #262626;"></div>
<div class="t" style="left:199px;top:583px;font-size:12.5px;color:#c8c8c8;letter-spacing:0.008px;">Fill</div>
<div class="t" style="left:240px;top:583px;color:#999;">|</div>
<div class="a" style="left:246px;top:583.5px;width:11px;height:12px;background:#262626;border-radius:2px;"></div>
<svg style="left:246px;top:583.5px;" width="11" height="12" viewBox="0 0 11 12"><path d="M1.5 10.5 L9.5 1.5" stroke="#a04848" stroke-width="1"/></svg>
<div class="t" style="left:266px;top:583px;font-size:12.5px;color:#c8c8c8;letter-spacing:-0.188px;">Stroke</div>
<div class="t" style="left:317px;top:583px;color:#999;">|</div>
<div class="t" style="left:340px;top:583px;font-size:12.5px;color:#c8c8c8;letter-spacing:-0.423px;">Masks</div>
<div class="t" style="left:394px;top:583px;color:#999;">|</div>
<div class="t" style="left:408px;top:583px;font-size:12.5px;color:#c8c8c8;letter-spacing:-0.449px;">Advanced</div>
<div class="a" style="left:7.5px;top:600px;width:466.5px;height:424px;background:#333333;border-radius:0 0 4px 0;"></div>
<svg style="left:13.5px;top:604.9px;" width="11" height="11" viewBox="0 0 11 11"><circle cx="5.5" cy="5.5" r="4.5" fill="none" stroke="#6a6a6a" stroke-width="1.2"/></svg>
<div class="t" style="left:30px;top:605px;font-size:12.5px;color:#e0e0e0;letter-spacing:0.066px;">Position</div>
<div class="a" style="left:177px;top:603px;width:94px;height:16px;background:#262626;border-radius:3px;"></div>
<div class="t" style="left:182px;top:605px;color:#6f6f6f;">X</div>
<div class="t" style="left:194px;top:605px;color:#e6e6e6;">3.9</div>
<div class="a" style="left:277px;top:603px;width:94px;height:16px;background:#262626;border-radius:3px;"></div>
<div class="t" style="left:282px;top:605px;color:#6f6f6f;">Y</div>
<div class="t" style="left:294px;top:605px;color:#e6e6e6;">87.62</div>
<svg style="left:13.5px;top:626.9px;" width="11" height="11" viewBox="0 0 11 11"><circle cx="5.5" cy="5.5" r="4.5" fill="none" stroke="#6a6a6a" stroke-width="1.2"/></svg>
<div class="t" style="left:30px;top:627px;font-size:12.5px;color:#e0e0e0;letter-spacing:-0.069px;">Rotation</div>
<div class="a" style="left:177px;top:625px;width:94px;height:16px;background:#262626;border-radius:3px;"></div>
<div class="t" style="left:182px;top:627px;color:#6f6f6f;">Z</div>
<div class="t" style="left:194px;top:627px;color:#e6e6e6;">0.0</div>
<svg style="left:13.5px;top:648.9px;" width="11" height="11" viewBox="0 0 11 11"><circle cx="5.5" cy="5.5" r="4.5" fill="none" stroke="#6a6a6a" stroke-width="1.2"/></svg>
<div class="t" style="left:30px;top:649px;font-size:12.5px;color:#e0e0e0;letter-spacing:-0.654px;">Scale</div>
<div class="a" style="left:177px;top:647px;width:94px;height:16px;background:#262626;border-radius:3px;"></div>
<div class="t" style="left:182px;top:649px;color:#6f6f6f;">X</div>
<div class="t" style="left:194px;top:649px;color:#e6e6e6;">1.0</div>
<div class="a" style="left:277px;top:647px;width:94px;height:16px;background:#262626;border-radius:3px;"></div>
<div class="t" style="left:282px;top:649px;color:#6f6f6f;">Y</div>
<div class="t" style="left:294px;top:649px;color:#e6e6e6;">1.0</div>
<div class="a" style="left:377px;top:647.5px;width:15.5px;height:15.5px;background:#2c2c2c;border-radius:4px;box-shadow:inset 0 0 0 1px #222, 0 1px 0 #222;"></div>
<svg style="left:377px;top:647.5px;" width="15.5" height="15.5" viewBox="0 0 15.5 15.5"><path d="M5 6 V4.5 A2.75 2.75 0 0 1 10.5 4.5 V6 M5 9.5 V11 A2.75 2.75 0 0 0 10.5 11 V9.5" fill="none" stroke="#bbb" stroke-width="1"/></svg>
<svg style="left:13.5px;top:670.9px;" width="11" height="11" viewBox="0 0 11 11"><circle cx="5.5" cy="5.5" r="4.5" fill="none" stroke="#6a6a6a" stroke-width="1.2"/></svg>
<div class="t" style="left:30px;top:671px;font-size:12.5px;color:#e0e0e0;letter-spacing:-0.642px;">Skew</div>
<div class="a" style="left:177px;top:669px;width:94px;height:16px;background:#262626;border-radius:3px;"></div>
<div class="t" style="left:182px;top:671px;color:#6f6f6f;">X</div>
<div class="t" style="left:194px;top:671px;color:#e6e6e6;">0.0</div>
<div class="a" style="left:277px;top:669px;width:94px;height:16px;background:#262626;border-radius:3px;"></div>
<div class="t" style="left:282px;top:671px;color:#6f6f6f;">Y</div>
<div class="t" style="left:294px;top:671px;color:#e6e6e6;">0.0</div>
<svg style="left:13.5px;top:692.9px;" width="11" height="11" viewBox="0 0 11 11"><circle cx="5.5" cy="5.5" r="4.5" fill="none" stroke="#6a6a6a" stroke-width="1.2"/></svg>
<div class="t" style="left:30px;top:693px;font-size:12.5px;color:#e0e0e0;letter-spacing:-0.158px;">Pivot</div>
<div class="a" style="left:177px;top:691px;width:94px;height:16px;background:#262626;border-radius:3px;"></div>
<div class="t" style="left:182px;top:693px;color:#6f6f6f;">X</div>
<div class="t" style="left:194px;top:693px;color:#e6e6e6;">0.0</div>
<div class="a" style="left:277px;top:691px;width:94px;height:16px;background:#262626;border-radius:3px;"></div>
<div class="t" style="left:282px;top:693px;color:#6f6f6f;">Y</div>
<div class="t" style="left:294px;top:693px;color:#e6e6e6;">0.0</div>
<div class="a" style="left:7.5px;top:712px;width:466.5px;height:1.5px;background:#282828;"></div>
<svg style="left:13.5px;top:719.9px;" width="11" height="11" viewBox="0 0 11 11"><circle cx="5.5" cy="5.5" r="4.5" fill="none" stroke="#6a6a6a" stroke-width="1.2"/></svg>
<div class="t" style="left:30px;top:720px;font-size:12.5px;color:#e0e0e0;letter-spacing:-0.196px;">Opacity</div>
<div class="a" style="left:177px;top:724.2px;width:186px;height:4.2px;background:#e4e4e4;border-radius:2px;"></div>
<svg style="left:360.2px;top:720.2px;" width="12" height="12" viewBox="0 0 12 12"><circle cx="6" cy="6" r="5.3" fill="#76ccb4"/><circle cx="6" cy="6" r="2" fill="#5fa591"/></svg>
<div class="a" style="left:377px;top:718px;width:94px;height:16px;background:#262626;border-radius:3px;"></div>
<div class="t" style="left:382px;top:720px;color:#6f6f6f;">%</div>
<div class="t" style="left:394px;top:720px;color:#e6e6e6;">100.0</div>
<svg style="left:13.5px;top:741.9px;" width="11" height="11" viewBox="0 0 11 11"><circle cx="5.5" cy="5.5" r="4.5" fill="none" stroke="#6a6a6a" stroke-width="1.2"/></svg>
<div class="t" style="left:30px;top:742px;font-size:12.5px;color:#e0e0e0;letter-spacing:-0.371px;">Blend Mode</div>
<div class="a" style="left:177.5px;top:741px;width:192.5px;height:14.5px;background:#4e4e4e;border-radius:3px;"></div>
<div class="t" style="left:180.5px;top:742.25px;color:#e6e6e6;">Normal</div>
<svg style="left:355px;top:745.75px;" width="9" height="5" viewBox="0 0 9 5"><path d="M0.5 0.5 L4.5 4.5 L8.5 0.5" fill="none" stroke="#cfcfcf" stroke-width="1"/></svg>
<div class="t" style="left:30px;top:764px;font-size:12.5px;color:#e0e0e0;letter-spacing:-0.26px;">Deformers</div>
<div class="a" style="left:177.5px;top:762px;width:93.5px;height:16px;background:#262626;border-radius:3px;"></div>
<svg style="left:181px;top:765px;" width="12" height="11" viewBox="0 0 12 11"><path d="M0.5 1 H10 M0.5 3.8 H8 M0.5 6.6 H10 M0.5 9.4 H8" stroke="#999" stroke-width="0.9"/></svg>
<div class="t" style="left:194px;top:764px;color:#cfcfcf;">0</div>
<div class="a" style="left:273.5px;top:762px;width:15px;height:16px;background:#2c2c2c;border-radius:3px;box-shadow:inset 0 0 0 1px #222, 0 1px 0 #222;"></div>
<svg style="left:273.5px;top:762px;" width="15" height="16" viewBox="0 0 15 16"><path d="M7.5 3.5 V12 M3.3 7.8 H11.7" stroke="#eee" stroke-width="1.6"/><path d="M12.5 15.5 L15 13 V15.5 Z" fill="#5ec9a9"/></svg>
<div class="a" style="left:398.5px;top:761.5px;width:15.5px;height:16.5px;background:#333;border-radius:4px;box-shadow:inset 0 0 0 1px #222, 0 1px 0 #222;"></div>
<svg style="left:398.5px;top:761.5px;" width="15.5" height="16.5" viewBox="0 0 15.5 16.5"><rect x="2.5" y="3.5" width="10" height="9" fill="none" stroke="#888" stroke-width="0.9"/><path d="M4.5 11 L11 4.5 M8 4.5 H11 V7.5" stroke="#8cc89a" stroke-width="1" fill="none"/></svg>
<div class="a" style="left:416px;top:761.5px;width:15.5px;height:16.5px;background:#333;border-radius:4px;box-shadow:inset 0 0 0 1px #222, 0 1px 0 #222;"></div>
<svg style="left:416px;top:761.5px;" width="15.5" height="16.5" viewBox="0 0 15.5 16.5"><path d="M1.5 7.5 C4 1 7 1 8 7.5 C9 14 12 14 14.5 7.5" fill="none" stroke="#8cc89a" stroke-width="1.2"/><circle cx="2" cy="7.5" r="1.3" fill="#ddd"/><circle cx="13.5" cy="7.5" r="1.3" fill="#ddd"/></svg>
<div class="a" style="left:434px;top:761.5px;width:15.5px;height:16.5px;background:#333;border-radius:4px;box-shadow:inset 0 0 0 1px #222, 0 1px 0 #222;"></div>
<svg style="left:434px;top:761.5px;" width="15.5" height="16.5" viewBox="0 0 15.5 16.5"><path d="M1 9 L4 3 L7 12 L10 3 L13 12 L15 7" fill="none" stroke="#8cc89a" stroke-width="1.2"/></svg>
<div class="a" style="left:452.5px;top:759px;width:1px;height:22px;background:#555;"></div>
<div class="a" style="left:455.5px;top:762px;width:15px;height:16px;background:#2c2c2c;border-radius:3px;box-shadow:inset 0 0 0 1px #222, 0 1px 0 #222;"></div>
<svg style="left:455.5px;top:762px;" width="15" height="16" viewBox="0 0 15 16"><rect x="2.5" y="3.5" width="10" height="2" fill="#8cd49a"/><rect x="2.5" y="7" width="10" height="2" fill="#ddd"/><rect x="2.5" y="10.5" width="10" height="2" fill="#ddd"/></svg>
<div class="t" style="left:30px;top:786px;font-size:12.5px;color:#e0e0e0;letter-spacing:-0.004px;">Filters</div>
<div class="a" style="left:177.5px;top:784px;width:93.5px;height:16px;background:#262626;border-radius:3px;"></div>
<svg style="left:181px;top:787px;" width="12" height="11" viewBox="0 0 12 11"><path d="M0.5 1 H10 M0.5 3.8 H8 M0.5 6.6 H10 M0.5 9.4 H8" stroke="#999" stroke-width="0.9"/></svg>
<div class="t" style="left:194px;top:786px;color:#cfcfcf;">0</div>
<div class="a" style="left:273.5px;top:784px;width:15px;height:16px;background:#2c2c2c;border-radius:3px;box-shadow:inset 0 0 0 1px #222, 0 1px 0 #222;"></div>
<svg style="left:273.5px;top:784px;" width="15" height="16" viewBox="0 0 15 16"><path d="M7.5 3.5 V12 M3.3 7.8 H11.7" stroke="#eee" stroke-width="1.6"/><path d="M12.5 15.5 L15 13 V15.5 Z" fill="#5ec9a9"/></svg>
<div class="a" style="left:455.5px;top:785px;width:15px;height:15.5px;background:#2c2c2c;border-radius:3px;box-shadow:inset 0 0 0 1px #222, 0 1px 0 #222;"></div>
<svg style="left:455.5px;top:785px;" width="15" height="15.5" viewBox="0 0 15 15.5"><rect x="2.2" y="2.2" width="10.6" height="10.6" fill="none" stroke="#ccc" stroke-width="1"/><rect x="3.5" y="3.5" width="8" height="8" fill="#c9a0a8"/><circle cx="7.5" cy="7.5" r="2.5" fill="#f0b8c0"/></svg>
<svg style="left:13.5px;top:807.9px;" width="11" height="11" viewBox="0 0 11 11"><circle cx="5.5" cy="5.5" r="4.5" fill="none" stroke="#6a6a6a" stroke-width="1.2"/></svg>
<div class="t" style="left:30px;top:808px;font-size:12.5px;color:#e0e0e0;letter-spacing:-0.02px;">Motion Blur</div>
<div class="a" style="left:177.5px;top:806.5px;width:192.5px;height:14.5px;background:#4e4e4e;border-radius:3px;"></div>
<div class="t" style="left:180.5px;top:807.75px;color:#e6e6e6;">None</div>
<svg style="left:355px;top:811.25px;" width="9" height="5" viewBox="0 0 9 5"><path d="M0.5 0.5 L4.5 4.5 L8.5 0.5" fill="none" stroke="#cfcfcf" stroke-width="1"/></svg>
<div class="a" style="left:7.5px;top:826.5px;width:466.5px;height:1.5px;background:#282828;"></div>
<svg style="left:13.5px;top:834.9px;" width="11" height="11" viewBox="0 0 11 11"><circle cx="5.5" cy="5.5" r="4.5" fill="none" stroke="#6a6a6a" stroke-width="1.2"/></svg>
<div class="t" style="left:30px;top:835px;font-size:12.5px;color:#e0e0e0;letter-spacing:0.058px;">String</div>
<div class="a" style="left:192.5px;top:833px;width:78px;height:16.5px;background:#303030;border-radius:4px;box-shadow:inset 0 0 0 1px #222, 0 1px 0 #222;"></div>
<div class="t" style="left:214px;top:835px;font-size:12.5px;color:#e6e6e6;letter-spacing:-0.142px;">Generator</div>
<div class="a" style="left:273.5px;top:833px;width:78px;height:16.5px;background:#303030;border-radius:4px;box-shadow:inset 0 0 0 1px #222, 0 1px 0 #222;"></div>
<div class="t" style="left:295px;top:835px;font-size:12.5px;color:#e6e6e6;letter-spacing:-0.709px;">OpenType</div>
<div class="a" style="left:354.5px;top:833px;width:53px;height:16.5px;background:#303030;border-radius:4px;box-shadow:inset 0 0 0 1px #222, 0 1px 0 #222;"></div>
<div class="t" style="left:375px;top:835px;font-size:12.5px;color:#e6e6e6;letter-spacing:-0.53px;">Reset</div>
<div class="a" style="left:410.5px;top:833px;width:60px;height:16.5px;background:#303030;border-radius:4px;box-shadow:inset 0 0 0 1px #222, 0 1px 0 #222;"></div>
<div class="t" style="left:432px;top:835px;font-size:12.5px;color:#e6e6e6;letter-spacing:-0.484px;">Glyphs</div>
<svg style="left:197px;top:835px;" width="14" height="13" viewBox="0 0 14 13"><path d="M6 2 V11 M1.5 6.5 H10.5" stroke="#eee" stroke-width="1.5"/><path d="M9.5 13 L12 10.5 V13 Z" fill="#5ec9a9"/></svg>
<svg style="left:279px;top:835px;" width="12" height="13" viewBox="0 0 12 13"><ellipse cx="6" cy="6.5" rx="3.5" ry="5" fill="none" stroke="#ddd" stroke-width="1.1"/><path d="M7 1.5 C5 4 5 9 7 11.5" fill="none" stroke="#ddd" stroke-width="0.8"/></svg>
<svg style="left:359px;top:835px;" width="13" height="13" viewBox="0 0 13 13"><path d="M3 5 A4.5 4.5 0 1 1 4 10" fill="none" stroke="#ddd" stroke-width="1.3"/><path d="M1 4 L4.5 2 L4.5 6.5 Z" fill="#ddd"/></svg>
<svg style="left:415px;top:835px;" width="13" height="13" viewBox="0 0 13 13"><path d="M6.5 1.5 L12 11 H1 Z" fill="none" stroke="#ddd" stroke-width="1.1"/></svg>
<div class="a" style="left:29px;top:854px;width:443px;height:62px;background:#262626;"></div>
<div class="t" style="left:36px;top:859px;color:#555;">T</div>
<div class="t" style="left:49px;top:859.5px;font-size:12.5px;color:#e6e6e6;letter-spacing:-0.363px;">Cavalry Typing Text 01</div>
<svg style="left:13.5px;top:922.9px;" width="11" height="11" viewBox="0 0 11 11"><circle cx="5.5" cy="5.5" r="4.5" fill="none" stroke="#6a6a6a" stroke-width="1.2"/></svg>
<div class="t" style="left:30px;top:923px;font-size:12.5px;color:#e0e0e0;letter-spacing:-0.252px;">Font</div>
<div class="a" style="left:177.5px;top:921px;width:190px;height:16px;background:#262626;border-radius:3px;"></div>
<div class="t" style="left:180.5px;top:923px;color:#e6e6e6;">Montserrat</div>
<svg style="left:352.5px;top:926.5px;" width="9" height="5" viewBox="0 0 9 5"><path d="M0.5 0.5 L4.5 4.5 L8.5 0.5" fill="none" stroke="#cfcfcf" stroke-width="1"/></svg>
<div class="a" style="left:372px;top:921px;width:99px;height:16px;background:#262626;border-radius:3px;"></div>
<div class="t" style="left:375px;top:923px;color:#e6e6e6;">Bold</div>
<svg style="left:456px;top:926.5px;" width="9" height="5" viewBox="0 0 9 5"><path d="M0.5 0.5 L4.5 4.5 L8.5 0.5" fill="none" stroke="#cfcfcf" stroke-width="1"/></svg>
<svg style="left:13.5px;top:944.9px;" width="11" height="11" viewBox="0 0 11 11"><circle cx="5.5" cy="5.5" r="4.5" fill="none" stroke="#6a6a6a" stroke-width="1.2"/></svg>
<div class="t" style="left:30px;top:945px;font-size:12.5px;color:#e0e0e0;letter-spacing:-0.465px;">Typeface</div>
<div class="a" style="left:177.5px;top:941px;width:294px;height:19.5px;background:#2b2b2b;border-radius:3px;"></div>
<div class="t" style="left:182px;top:945px;color:#555;">C</div>
<div class="t" style="left:194px;top:945px;font-size:12.5px;color:#7c7c7c;letter-spacing:-0.36px;">No Connection</div>
<svg style="left:13.5px;top:966.9px;" width="11" height="11" viewBox="0 0 11 11"><circle cx="5.5" cy="5.5" r="4.5" fill="none" stroke="#6a6a6a" stroke-width="1.2"/></svg>
<div class="t" style="left:30px;top:967px;font-size:12.5px;color:#e0e0e0;letter-spacing:-0.311px;">Font Size</div>
<div class="a" style="left:177.8px;top:965.5px;width:92.5px;height:15px;background:#262626;border-radius:3px;"></div>
<div class="t" style="left:182.8px;top:967px;color:#6f6f6f;">#</div>
<div class="t" style="left:194.8px;top:967px;color:#e6e6e6;">130.0</div>
<div class="t" style="left:30px;top:989px;font-size:12.5px;color:#e0e0e0;letter-spacing:-0.158px;">Style</div>
<div class="a" style="left:177.5px;top:986.5px;width:17px;height:17px;background:#2e2e2e;border-radius:4px;box-shadow:inset 0 0 0 1px #222, 0 1px 0 #222;"></div>
<div class="a" style="left:197px;top:986.5px;width:17px;height:17px;background:#2e2e2e;border-radius:4px;box-shadow:inset 0 0 0 1px #222, 0 1px 0 #222;"></div>
<div class="a" style="left:217px;top:986.5px;width:17px;height:17px;background:#2e2e2e;border-radius:4px;box-shadow:inset 0 0 0 1px #222, 0 1px 0 #222;"></div>
<div class="a" style="left:237px;top:986.5px;width:17px;height:17px;background:#2e2e2e;border-radius:4px;box-shadow:inset 0 0 0 1px #222, 0 1px 0 #222;"></div>
<svg style="left:177.5px;top:986.5px;" width="17" height="17" viewBox="0 0 17 17"><path d="M5.5 4 V9.5 A3 3 0 0 0 11.5 9.5 V4" fill="none" stroke="#ccc" stroke-width="1.1"/><path d="M4.5 14 H12.5" stroke="#ccc" stroke-width="1"/></svg>
<svg style="left:197px;top:986.5px;" width="17" height="17" viewBox="0 0 17 17"><path d="M11.5 5.5 C10.5 3.5 5.5 3.5 5.5 6 M5.5 11 C6.5 13.5 11.5 13.5 11.5 11" fill="none" stroke="#ccc" stroke-width="1.1"/><path d="M3.5 8.5 H13.5" stroke="#ccc" stroke-width="1"/></svg>
<svg style="left:217px;top:986.5px;" width="17" height="17" viewBox="0 0 17 17"><path d="M3 4 H10 M6.5 4 V13" stroke="#ccc" stroke-width="1.2"/><path d="M12.5 11 V14" stroke="#ccc" stroke-width="1"/></svg>
<svg style="left:237px;top:986.5px;" width="17" height="17" viewBox="0 0 17 17"><path d="M3 5 H10 M6.5 5 V14" stroke="#ccc" stroke-width="1.2"/><path d="M12.5 3 V6" stroke="#ccc" stroke-width="1"/></svg>
<div class="a" style="left:258.5px;top:986.5px;width:17px;height:17px;background:#2a2a2a;border-radius:4px;box-shadow:inset 0 0 0 1px #222, 0 1px 0 #222;"></div>
<svg style="left:258.5px;top:986.5px;" width="17" height="17" viewBox="0 0 17 17"><g transform="translate(8.5 8.5)"><circle r="4.2" fill="none" stroke="#ddd" stroke-width="2.6"/><g stroke="#ddd" stroke-width="2.4"><path d="M0 -6.2 V6.2 M-6.2 0 H6.2 M-4.4 -4.4 L4.4 4.4 M4.4 -4.4 L-4.4 4.4"/></g><circle r="2.2" fill="#2a2a2a"/></g></svg>
<svg style="left:13.5px;top:1010.9px;" width="11" height="11" viewBox="0 0 11 11"><circle cx="5.5" cy="5.5" r="4.5" fill="none" stroke="#6a6a6a" stroke-width="1.2"/></svg>
<div class="t" style="left:30px;top:1011px;font-size:12.5px;color:#e0e0e0;letter-spacing:-0.176px;">Alignment</div>
<div class="a" style="left:177px;top:1008px;width:75px;height:16px;background:#575757;border-radius:4px 4px 0 0;"></div>
<div class="a" style="left:197px;top:1008px;width:16px;height:16px;background:#262626;"></div>
<svg style="left:181px;top:1010px;" width="12" height="13" viewBox="0 0 12 13"><path d="M1 2 H9 M1 5 H6 M1 8 H9 M1 11 H6" stroke="#ddd" stroke-width="1.1"/></svg>
<svg style="left:200px;top:1010px;" width="12" height="13" viewBox="0 0 12 13"><path d="M1 2 H10 M3 5 H8 M1 8 H10 M3 11 H8" stroke="#3ecf6e" stroke-width="1.1"/></svg>
<svg style="left:219px;top:1010px;" width="12" height="13" viewBox="0 0 12 13"><path d="M1 2 H10 M4 5 H10 M1 8 H10 M4 11 H10" stroke="#ddd" stroke-width="1.1"/></svg>
<svg style="left:237px;top:1010px;" width="12" height="13" viewBox="0 0 12 13"><path d="M1 2 H11 M1 5 H11 M1 8 H11 M1 11 H11" stroke="#ddd" stroke-width="1.1"/></svg>
<!-- 30_tools.py -->
<div class="a" style="left:503px;top:89px;width:2px;height:2px;background:#8a8a8a;border-radius:1px;"></div>
<div class="a" style="left:508px;top:89px;width:2px;height:2px;background:#8a8a8a;border-radius:1px;"></div>
<div class="a" style="left:513px;top:89px;width:2px;height:2px;background:#8a8a8a;border-radius:1px;"></div>
<svg style="left:499px;top:99px;" width="20" height="20" viewBox="0 0 20 20"><path d="M5 1 V17.5 L8.6 13.8 L11.2 19 L13.6 17.8 L11 12.6 H16.5 Z" fill="none" stroke="#dedede" stroke-width="1.2" stroke-linejoin="miter"/></svg>
<svg style="left:499px;top:130px;" width="20" height="20" viewBox="0 0 20 20"><path d="M5 0.5 V20 L10 13.2 H19 Z" fill="#dedede"/></svg>
<svg style="left:499px;top:160px;" width="20" height="20" viewBox="0 0 20 20"><g transform="rotate(-45 10 10)"><path d="M10 1 L15 9 L13 14 H7 L5 9 Z" fill="#d8d8d8"/><circle cx="10" cy="9.5" r="1.3" fill="#333"/><path d="M10 1 V8" stroke="#555" stroke-width="0.6"/><rect x="6.5" y="15" width="7" height="3.5" fill="#d8d8d8"/></g></svg>
<svg style="left:499px;top:190px;" width="20" height="20" viewBox="0 0 20 20"><path d="M4 17.5 L5 13.5 L15 3.5 A2 2 0 0 1 18 6.5 L8 16.5 Z" fill="#d8d8d8"/><path d="M3 19 L4.5 15.5 L6.5 17.5 Z" fill="#aaa"/><path d="M13.5 5 L16.5 8" stroke="#555" stroke-width="0.7"/></svg>
<svg style="left:499px;top:220px;" width="20" height="20" viewBox="0 0 20 20"><rect x="1" y="6" width="12" height="10" rx="1" fill="#dcdcdc"/><rect x="3" y="3.5" width="6" height="3" rx="0.8" fill="#dcdcdc"/><path d="M12.5 11 L19 6.5 V15.5 Z" fill="#dcdcdc"/><circle cx="4.3" cy="9" r="1.1" fill="#333"/></svg>
<svg style="left:499px;top:250px;" width="20" height="20" viewBox="0 0 20 20"><path d="M2 18 L17.5 2.5" stroke="#d8d8d8" stroke-width="1.2"/></svg>
<div class="a" style="left:495.5px;top:276.5px;width:27px;height:27px;background:#181818;border-radius:4px;"></div>
<svg style="left:499px;top:280px;" width="20" height="20" viewBox="0 0 20 20"><path d="M3 3.5 H17 M10 3.5 V18" stroke="#3ecf6e" stroke-width="3.2"/></svg>
<svg style="left:499px;top:310px;" width="20" height="20" viewBox="0 0 20 20"><path d="M3 2 V14 L6.5 10.5 L12 10.5 Z" fill="#dcdcdc"/><path d="M12 2.5 L17 3.5 L18 17 L3 17.5" fill="none" stroke="#dcdcdc" stroke-width="1" stroke-dasharray="2 2"/><rect x="1.5" y="16" width="3" height="3" fill="#eee"/><rect x="16.5" y="16" width="3" height="3" fill="#eee"/><rect x="15.5" y="1.5" width="3" height="3" fill="#eee"/></svg>
<svg style="left:499px;top:340px;" width="20" height="20" viewBox="0 0 20 20"><defs><linearGradient id="gw" x1="0" y1="0" x2="0" y2="1"><stop offset="0" stop-color="#f4f4f4"/><stop offset="1" stop-color="#cfcfcf"/></linearGradient></defs><rect x="3" y="3" width="14.5" height="14" fill="url(#gw)"/></svg>
<svg style="left:499px;top:370px;" width="20" height="20" viewBox="0 0 20 20"><circle cx="10" cy="10" r="7.5" fill="url(#gw)"/></svg>
<svg style="left:499px;top:400px;" width="20" height="20" viewBox="0 0 20 20"><path d="M10 2 L18 8 L15 17.5 H5 L2 8 Z" fill="url(#gw)"/></svg>
<svg style="left:499px;top:430px;" width="20" height="20" viewBox="0 0 20 20"><path d="M10 1.5 L12.3 7.3 L18.5 7.5 L13.6 11.4 L15.3 17.5 L10 14 L4.7 17.5 L6.4 11.4 L1.5 7.5 L7.7 7.3 Z" fill="url(#gw)"/></svg>
<svg style="left:499px;top:460px;" width="20" height="20" viewBox="0 0 20 20"><path d="M4.5 14 A6.5 6.5 0 1 1 16 11" fill="none" stroke="url(#gw)" stroke-width="3"/></svg>
<svg style="left:499px;top:490px;" width="20" height="20" viewBox="0 0 20 20"><path d="M10 1.5 Q11 9 18.5 10 Q11 11 10 18.5 Q9 11 1.5 10 Q9 9 10 1.5 Z" fill="url(#gw)"/></svg>
<svg style="left:499px;top:520px;" width="20" height="20" viewBox="0 0 20 20"><g transform="translate(10 10)"><g fill="#dadada"><rect x="-2" y="-8.5" width="4" height="17"/><rect x="-2" y="-8.5" width="4" height="17" transform="rotate(45)"/><rect x="-2" y="-8.5" width="4" height="17" transform="rotate(90)"/><rect x="-2" y="-8.5" width="4" height="17" transform="rotate(135)"/></g><circle r="5.8" fill="#dadada"/><circle r="2.6" fill="#474747"/></g></svg>
<svg style="left:499px;top:550px;" width="20" height="20" viewBox="0 0 20 20"><path d="M1.5 10 L6 5.5 V8.5 H14 V5.5 L18.5 10 L14 14.5 V11.5 H6 V14.5 Z" fill="#e0e0e0"/></svg>
<div class="a" style="left:500px;top:586px;width:19px;height:8.5px;background:linear-gradient(#f2f2f2,#cfcfcf);border-radius:4.5px;"></div>
<!-- 31_viewport.py -->
<div class="t" style="left:535px;top:90px;font-size:12.5px;color:#e6e6e6;letter-spacing:-0.342px;">Jumping Text Coloring 1</div>
<div class="t" style="left:535.5px;top:110px;font-size:10.5px;color:#bdbdbd;letter-spacing:0px;">px</div>
<svg style="left:550px;top:107px;" width="1037" height="20" viewBox="0 0 1037 20"><rect x="11.14" y="12" width="1" height="8" fill="#a8a8a8"/><rect x="23.80" y="16" width="1" height="4" fill="#a0a0a0"/><rect x="36.47" y="16" width="1" height="4" fill="#a0a0a0"/><rect x="49.14" y="16" width="1" height="4" fill="#a0a0a0"/><rect x="61.80" y="16" width="1" height="4" fill="#a0a0a0"/><rect x="74.47" y="12" width="1" height="8" fill="#a8a8a8"/><rect x="87.14" y="16" width="1" height="4" fill="#a0a0a0"/><rect x="99.80" y="16" width="1" height="4" fill="#a0a0a0"/><rect x="112.47" y="16" width="1" height="4" fill="#a0a0a0"/><rect x="125.14" y="16" width="1" height="4" fill="#a0a0a0"/><rect x="137.80" y="12" width="1" height="8" fill="#a8a8a8"/><rect x="150.47" y="16" width="1" height="4" fill="#a0a0a0"/><rect x="163.14" y="16" width="1" height="4" fill="#a0a0a0"/><rect x="175.80" y="16" width="1" height="4" fill="#a0a0a0"/><rect x="188.47" y="16" width="1" height="4" fill="#a0a0a0"/><rect x="201.13" y="12" width="1" height="8" fill="#a8a8a8"/><rect x="213.80" y="16" width="1" height="4" fill="#a0a0a0"/><rect x="226.47" y="16" width="1" height="4" fill="#a0a0a0"/><rect x="239.13" y="16" width="1" height="4" fill="#a0a0a0"/><rect x="251.80" y="16" width="1" height="4" fill="#a0a0a0"/><rect x="264.47" y="12" width="1" height="8" fill="#a8a8a8"/><rect x="277.13" y="16" width="1" height="4" fill="#a0a0a0"/><rect x="289.80" y="16" width="1" height="4" fill="#a0a0a0"/><rect x="302.47" y="16" width="1" height="4" fill="#a0a0a0"/><rect x="315.13" y="16" width="1" height="4" fill="#a0a0a0"/><rect x="327.80" y="12" width="1" height="8" fill="#a8a8a8"/><rect x="340.47" y="16" width="1" height="4" fill="#a0a0a0"/><rect x="353.13" y="16" width="1" height="4" fill="#a0a0a0"/><rect x="365.80" y="16" width="1" height="4" fill="#a0a0a0"/><rect x="378.47" y="16" width="1" height="4" fill="#a0a0a0"/><rect x="391.13" y="12" width="1" height="8" fill="#a8a8a8"/><rect x="403.80" y="16" width="1" height="4" fill="#a0a0a0"/><rect x="416.47" y="16" width="1" height="4" fill="#a0a0a0"/><rect x="429.13" y="16" width="1" height="4" fill="#a0a0a0"/><rect x="441.80" y="16" width="1" height="4" fill="#a0a0a0"/><rect x="454.47" y="12" width="1" height="8" fill="#a8a8a8"/><rect x="467.13" y="16" width="1" height="4" fill="#a0a0a0"/><rect x="479.80" y="16" width="1" height="4" fill="#a0a0a0"/><rect x="492.47" y="16" width="1" height="4" fill="#a0a0a0"/><rect x="505.13" y="16" width="1" height="4" fill="#a0a0a0"/><rect x="517.80" y="12" width="1" height="8" fill="#a8a8a8"/><rect x="530.47" y="16" width="1" height="4" fill="#a0a0a0"/><rect x="543.13" y="16" width="1" height="4" fill="#a0a0a0"/><rect x="555.80" y="16" width="1" height="4" fill="#a0a0a0"/><rect x="568.47" y="16" width="1" height="4" fill="#a0a0a0"/><rect x="581.13" y="12" width="1" height="8" fill="#a8a8a8"/><rect x="593.80" y="16" width="1" height="4" fill="#a0a0a0"/><rect x="606.47" y="16" width="1" height="4" fill="#a0a0a0"/><rect x="619.13" y="16" width="1" height="4" fill="#a0a0a0"/><rect x="631.80" y="16" width="1" height="4" fill="#a0a0a0"/><rect x="644.47" y="12" width="1" height="8" fill="#a8a8a8"/><rect x="657.13" y="16" width="1" height="4" fill="#a0a0a0"/><rect x="669.80" y="16" width="1" height="4" fill="#a0a0a0"/><rect x="682.47" y="16" width="1" height="4" fill="#a0a0a0"/><rect x="695.13" y="16" width="1" height="4" fill="#a0a0a0"/><rect x="707.80" y="12" width="1" height="8" fill="#a8a8a8"/><rect x="720.47" y="16" width="1" height="4" fill="#a0a0a0"/><rect x="733.13" y="16" width="1" height="4" fill="#a0a0a0"/><rect x="745.80" y="16" width="1" height="4" fill="#a0a0a0"/><rect x="758.47" y="16" width="1" height="4" fill="#a0a0a0"/><rect x="771.13" y="12" width="1" height="8" fill="#a8a8a8"/><rect x="783.80" y="16" width="1" height="4" fill="#a0a0a0"/><rect x="796.47" y="16" width="1" height="4" fill="#a0a0a0"/><rect x="809.13" y="16" width="1" height="4" fill="#a0a0a0"/><rect x="821.80" y="16" width="1" height="4" fill="#a0a0a0"/><rect x="834.46" y="12" width="1" height="8" fill="#a8a8a8"/><rect x="847.13" y="16" width="1" height="4" fill="#a0a0a0"/><rect x="859.80" y="16" width="1" height="4" fill="#a0a0a0"/><rect x="872.46" y="16" width="1" height="4" fill="#a0a0a0"/><rect x="885.13" y="16" width="1" height="4" fill="#a0a0a0"/><rect x="897.80" y="12" width="1" height="8" fill="#a8a8a8"/><rect x="910.46" y="16" width="1" height="4" fill="#a0a0a0"/><rect x="923.13" y="16" width="1" height="4" fill="#a0a0a0"/><rect x="935.80" y="16" width="1" height="4" fill="#a0a0a0"/><rect x="948.46" y="16" width="1" height="4" fill="#a0a0a0"/><rect x="961.13" y="12" width="1" height="8" fill="#a8a8a8"/><rect x="973.80" y="16" width="1" height="4" fill="#a0a0a0"/><rect x="986.46" y="16" width="1" height="4" fill="#a0a0a0"/><rect x="999.13" y="16" width="1" height="4" fill="#a0a0a0"/><rect x="1011.80" y="16" width="1" height="4" fill="#a0a0a0"/><rect x="1024.46" y="12" width="1" height="8" fill="#a8a8a8"/></svg>
<div class="t" style="left:599.969px;top:107.5px;font-size:10.2px;color:#c4c4c4;letter-spacing:-0.15px;width:50px;text-align:center;">-1050</div>
<div class="t" style="left:663.302px;top:107.5px;font-size:10.2px;color:#c4c4c4;letter-spacing:-0.15px;width:50px;text-align:center;">-900</div>
<div class="t" style="left:726.635px;top:107.5px;font-size:10.2px;color:#c4c4c4;letter-spacing:-0.15px;width:50px;text-align:center;">-750</div>
<div class="t" style="left:789.968px;top:107.5px;font-size:10.2px;color:#c4c4c4;letter-spacing:-0.15px;width:50px;text-align:center;">-600</div>
<div class="t" style="left:853.301px;top:107.5px;font-size:10.2px;color:#c4c4c4;letter-spacing:-0.15px;width:50px;text-align:center;">-450</div>
<div class="t" style="left:916.634px;top:107.5px;font-size:10.2px;color:#c4c4c4;letter-spacing:-0.15px;width:50px;text-align:center;">-300</div>
<div class="t" style="left:979.967px;top:107.5px;font-size:10.2px;color:#c4c4c4;letter-spacing:-0.15px;width:50px;text-align:center;">-150</div>
<div class="t" style="left:1043.3px;top:107.5px;font-size:10.2px;color:#c4c4c4;letter-spacing:-0.15px;width:50px;text-align:center;">0</div>
<div class="t" style="left:1106.63px;top:107.5px;font-size:10.2px;color:#c4c4c4;letter-spacing:-0.15px;width:50px;text-align:center;">150</div>
<div class="t" style="left:1169.97px;top:107.5px;font-size:10.2px;color:#c4c4c4;letter-spacing:-0.15px;width:50px;text-align:center;">300</div>
<div class="t" style="left:1233.3px;top:107.5px;font-size:10.2px;color:#c4c4c4;letter-spacing:-0.15px;width:50px;text-align:center;">450</div>
<div class="t" style="left:1296.63px;top:107.5px;font-size:10.2px;color:#c4c4c4;letter-spacing:-0.15px;width:50px;text-align:center;">600</div>
<div class="t" style="left:1359.96px;top:107.5px;font-size:10.2px;color:#c4c4c4;letter-spacing:-0.15px;width:50px;text-align:center;">750</div>
<div class="t" style="left:1423.3px;top:107.5px;font-size:10.2px;color:#c4c4c4;letter-spacing:-0.15px;width:50px;text-align:center;">900</div>
<div class="t" style="left:1486.63px;top:107.5px;font-size:10.2px;color:#c4c4c4;letter-spacing:-0.15px;width:50px;text-align:center;">1050</div>
<div class="t" style="left:1549.96px;top:107.5px;font-size:10.2px;color:#c4c4c4;letter-spacing:-0.15px;width:50px;text-align:center;">1200</div>
<div class="a" style="left:1327.5px;top:107px;width:1.2px;height:20px;background:#c84848;"></div>
<svg style="left:530px;top:127px;" width="20" height="482" viewBox="0 0 20 482"><rect x="16" y="481.17" width="4" height="1" fill="#a0a0a0"/><rect x="16" y="468.50" width="4" height="1" fill="#a0a0a0"/><rect x="16" y="455.83" width="4" height="1" fill="#a0a0a0"/><rect x="16" y="443.17" width="4" height="1" fill="#a0a0a0"/><rect x="12" y="430.50" width="8" height="1" fill="#a8a8a8"/><rect x="16" y="417.83" width="4" height="1" fill="#a0a0a0"/><rect x="16" y="405.17" width="4" height="1" fill="#a0a0a0"/><rect x="16" y="392.50" width="4" height="1" fill="#a0a0a0"/><rect x="16" y="379.83" width="4" height="1" fill="#a0a0a0"/><rect x="12" y="367.17" width="8" height="1" fill="#a8a8a8"/><rect x="16" y="354.50" width="4" height="1" fill="#a0a0a0"/><rect x="16" y="341.83" width="4" height="1" fill="#a0a0a0"/><rect x="16" y="329.17" width="4" height="1" fill="#a0a0a0"/><rect x="16" y="316.50" width="4" height="1" fill="#a0a0a0"/><rect x="12" y="303.83" width="8" height="1" fill="#a8a8a8"/><rect x="16" y="291.17" width="4" height="1" fill="#a0a0a0"/><rect x="16" y="278.50" width="4" height="1" fill="#a0a0a0"/><rect x="16" y="265.83" width="4" height="1" fill="#a0a0a0"/><rect x="16" y="253.17" width="4" height="1" fill="#a0a0a0"/><rect x="12" y="240.50" width="8" height="1" fill="#a8a8a8"/><rect x="16" y="227.83" width="4" height="1" fill="#a0a0a0"/><rect x="16" y="215.17" width="4" height="1" fill="#a0a0a0"/><rect x="16" y="202.50" width="4" height="1" fill="#a0a0a0"/><rect x="16" y="189.83" width="4" height="1" fill="#a0a0a0"/><rect x="12" y="177.17" width="8" height="1" fill="#a8a8a8"/><rect x="16" y="164.50" width="4" height="1" fill="#a0a0a0"/><rect x="16" y="151.83" width="4" height="1" fill="#a0a0a0"/><rect x="16" y="139.17" width="4" height="1" fill="#a0a0a0"/><rect x="16" y="126.50" width="4" height="1" fill="#a0a0a0"/><rect x="12" y="113.83" width="8" height="1" fill="#a8a8a8"/><rect x="16" y="101.17" width="4" height="1" fill="#a0a0a0"/><rect x="16" y="88.50" width="4" height="1" fill="#a0a0a0"/><rect x="16" y="75.83" width="4" height="1" fill="#a0a0a0"/><rect x="16" y="63.17" width="4" height="1" fill="#a0a0a0"/><rect x="12" y="50.50" width="8" height="1" fill="#a8a8a8"/><rect x="16" y="37.83" width="4" height="1" fill="#a0a0a0"/><rect x="16" y="25.17" width="4" height="1" fill="#a0a0a0"/><rect x="16" y="12.50" width="4" height="1" fill="#a0a0a0"/><rect x="16" y="-0.17" width="4" height="1" fill="#a0a0a0"/></svg>
<div class="t" style="left:512.5px;top:550.999px;width:50px;text-align:center;font-size:10.2px;letter-spacing:-0.15px;color:#c4c4c4;transform:rotate(-90deg)">-450</div>
<div class="t" style="left:512.5px;top:487.666px;width:50px;text-align:center;font-size:10.2px;letter-spacing:-0.15px;color:#c4c4c4;transform:rotate(-90deg)">-300</div>
<div class="t" style="left:512.5px;top:424.333px;width:50px;text-align:center;font-size:10.2px;letter-spacing:-0.15px;color:#c4c4c4;transform:rotate(-90deg)">-150</div>
<div class="t" style="left:512.5px;top:361px;width:50px;text-align:center;font-size:10.2px;letter-spacing:-0.15px;color:#c4c4c4;transform:rotate(-90deg)">0</div>
<div class="t" style="left:512.5px;top:297.667px;width:50px;text-align:center;font-size:10.2px;letter-spacing:-0.15px;color:#c4c4c4;transform:rotate(-90deg)">150</div>
<div class="t" style="left:512.5px;top:234.334px;width:50px;text-align:center;font-size:10.2px;letter-spacing:-0.15px;color:#c4c4c4;transform:rotate(-90deg)">300</div>
<div class="t" style="left:512.5px;top:171.001px;width:50px;text-align:center;font-size:10.2px;letter-spacing:-0.15px;color:#c4c4c4;transform:rotate(-90deg)">450</div>
<div class="a" style="left:530px;top:604.5px;width:20px;height:1.2px;background:#c84848;"></div>
<div class="t" style="left:755px;top:335px;height:60px;line-height:60px;font-size:57px;font-weight:bold;color:#666666;letter-spacing:0.72px">Cavalry Typing Text 01</div>
<svg style="left:0;top:0" width="1920" height="1030" viewBox="0 0 1920 1030"><path d="M723 321.5 H1418 M723 407.5 H1418" stroke="#d2d2d2" stroke-width="1" stroke-dasharray="6 4"/><path d="M744.5 314 V431 M1395.5 314 V431" stroke="#d2d2d2" stroke-width="1" stroke-dasharray="6 4"/><path d="M727 315.5 L721.5 321.5 L727 327.5 M727 401.5 L721.5 407.5 L727 413.5 M1413 315.5 L1418.5 321.5 L1413 327.5 M1413 401.5 L1418.5 407.5 L1413 413.5 M738.5 426 L744.5 432 L750.5 426 M1389.5 426 L1395.5 432 L1401.5 426" fill="none" stroke="#dadada" stroke-width="1" stroke-dasharray="3 2"/><rect x="741.5" y="318.5" width="6" height="6" fill="#fff" stroke="#aaaaaa" stroke-width="1.2"/><rect x="741.5" y="404.5" width="6" height="6" fill="#fff" stroke="#aaaaaa" stroke-width="1.2"/><rect x="1066.5" y="318.5" width="6" height="6" fill="#fff" stroke="#aaaaaa" stroke-width="1.2"/><rect x="1066.5" y="404.5" width="6" height="6" fill="#fff" stroke="#aaaaaa" stroke-width="1.2"/><rect x="1392.5" y="318.5" width="6" height="6" fill="#fff" stroke="#aaaaaa" stroke-width="1.2"/><rect x="1392.5" y="404.5" width="6" height="6" fill="#fff" stroke="#aaaaaa" stroke-width="1.2"/><rect x="741.5" y="361.5" width="6" height="6" fill="#fff" stroke="#aaaaaa" stroke-width="1.2"/><rect x="1392.5" y="361.5" width="6" height="6" fill="#fff" stroke="#aaaaaa" stroke-width="1.2"/><path d="M714 284.5 L720.5 291 L714 297.5 L707.5 291 Z" fill="none" stroke="#3ecf6e" stroke-width="1.3"/><path d="M1424.5 428 V437.5 H1415" fill="none" stroke="#2fc46e" stroke-width="1.6"/></svg>
<div class="t" style="left:569.5px;top:588px;font-size:12.5px;color:#f2f2f2;letter-spacing:-0.139px;">00:00:02:00</div>
<div class="t" style="left:998px;top:588px;font-size:12.5px;color:#ffffff;letter-spacing:-0.111px;-webkit-text-stroke:0;text-shadow:0.7px 0 0 #000,-0.7px 0 0 #000,0 0.7px 0 #000,0 -0.7px 0 #000;">Viewport Quality: High</div>
<div class="a" style="left:535px;top:612px;width:78px;height:16px;background:#262626;border-radius:3px;"></div>
<div class="t" style="left:538px;top:614px;color:#e6e6e6;">42%</div>
<svg style="left:598px;top:617.5px;" width="9" height="5" viewBox="0 0 9 5"><path d="M0.5 0.5 L4.5 4.5 L8.5 0.5" fill="none" stroke="#cfcfcf" stroke-width="1"/></svg>
<div class="a" style="left:866px;top:611px;width:100px;height:19px;background:#2c2c2c;border-radius:4px;box-shadow:inset 0 0 0 1px #232323;"></div>
<div class="a" style="left:886px;top:611.5px;width:1px;height:18px;background:#232323;"></div>
<div class="a" style="left:906px;top:611.5px;width:1px;height:18px;background:#232323;"></div>
<div class="a" style="left:926px;top:611.5px;width:1px;height:18px;background:#232323;"></div>
<div class="a" style="left:946px;top:611.5px;width:1px;height:18px;background:#232323;"></div>
<svg style="left:866px;top:611px;" width="20" height="19" viewBox="0 0 20 19"><rect x="4" y="5" width="1.6" height="9" fill="#ddd"/><path d="M15 5 V14 L6.5 9.5 Z" fill="#ddd"/></svg>
<svg style="left:886px;top:611px;" width="20" height="19" viewBox="0 0 20 19"><path d="M11 5 V14 L3.5 9.5 Z" fill="#ddd"/><rect x="13" y="5" width="1.6" height="9" fill="#ddd"/></svg>
<svg style="left:906px;top:611px;" width="20" height="19" viewBox="0 0 20 19"><path d="M6 5 V14 L14.5 9.5 Z" fill="#ddd"/></svg>
<svg style="left:926px;top:611px;" width="20" height="19" viewBox="0 0 20 19"><rect x="5" y="5" width="1.6" height="9" fill="#ddd"/><path d="M8.5 5 V14 L16 9.5 Z" fill="#ddd"/></svg>
<svg style="left:946px;top:611px;" width="20" height="19" viewBox="0 0 20 19"><path d="M4.5 5 V14 L12.5 9.5 Z" fill="#ddd"/><rect x="13.5" y="5" width="1.6" height="9" fill="#ddd"/></svg>
<div class="a" style="left:971px;top:611px;width:19.5px;height:19px;background:#2c2c2c;border-radius:4px;box-shadow:inset 0 0 0 1px #232323;"></div>
<svg style="left:971px;top:611px;" width="19.5" height="19" viewBox="0 0 19.5 19"><path d="M7 6.5 H4 V13.5 H15.5 V6.5 H12" fill="none" stroke="#ddd" stroke-width="1.2"/><path d="M8 9.5 L12 9.5 M10.5 4 L13 6.5 L10.5 9" fill="none" stroke="#ddd" stroke-width="1.2"/></svg>
<div class="a" style="left:1232px;top:611px;width:36.5px;height:18.5px;background:#2c2c2c;border-radius:4px;box-shadow:inset 0 0 0 1px #232323;"></div>
<svg style="left:1237px;top:615px;" width="14" height="11" viewBox="0 0 14 11"><path d="M1 5.5 L4.5 1.5 H13 V9.5 H4.5 Z" fill="#e0e0e0"/><circle cx="5" cy="5.5" r="1.4" fill="#333"/></svg>
<div class="t" style="left:1257.5px;top:614px;color:#9ab8d8;">0</div>
<div class="a" style="left:1272.5px;top:611px;width:31px;height:18.5px;background:#2c2c2c;border-radius:4px;box-shadow:inset 0 0 0 1px #232323;"></div>
<div class="a" style="left:1291px;top:612px;width:1px;height:16.5px;background:#3a3a3a;"></div>
<svg style="left:1275px;top:613px;" width="15" height="15" viewBox="0 0 15 15"><path d="M1 5 H4 L8 1.5 V13.5 L4 10 H1 Z" fill="#3ecf6e"/><path d="M10 4.5 Q12 7.5 10 10.5 M12 2.5 Q15.5 7.5 12 12.5" fill="none" stroke="#3ecf6e" stroke-width="1.3"/></svg>
<svg style="left:1294px;top:615.5px;" width="8" height="10" viewBox="0 0 8 10"><path d="M1 1.5 L6.5 5 L1 8.5 Z" fill="none" stroke="#aaa" stroke-width="0.9"/></svg>
<div class="a" style="left:1307.5px;top:611px;width:31px;height:18.5px;background:#2c2c2c;border-radius:4px;box-shadow:inset 0 0 0 1px #232323;"></div>
<div class="a" style="left:1326px;top:612px;width:1px;height:16.5px;background:#3a3a3a;"></div>
<svg style="left:1310px;top:613px;" width="15" height="15" viewBox="0 0 15 15"><path d="M3 11 V7 A4.5 4.5 0 0 1 12 7 V11" fill="none" stroke="#ddd" stroke-width="2.6" transform="rotate(-40 7.5 8)"/></svg>
<svg style="left:1329px;top:615.5px;" width="8" height="10" viewBox="0 0 8 10"><path d="M1 1.5 L6.5 5 L1 8.5 Z" fill="none" stroke="#aaa" stroke-width="0.9"/></svg>
<div class="a" style="left:1342.5px;top:611px;width:30.5px;height:18.5px;background:#2c2c2c;border-radius:4px;box-shadow:inset 0 0 0 1px #232323;"></div>
<div class="a" style="left:1361px;top:612px;width:1px;height:16.5px;background:#3a3a3a;"></div>
<svg style="left:1344px;top:612.5px;" width="16" height="16" viewBox="0 0 16 16"><path d="M5 1.5 V14.5 M10.5 1.5 V14.5 M1.5 5 H14.5 M1.5 10.5 H14.5" stroke="#ddd" stroke-width="1.2"/></svg>
<svg style="left:1364px;top:615.5px;" width="8" height="10" viewBox="0 0 8 10"><path d="M1 1.5 L6.5 5 L1 8.5 Z" fill="none" stroke="#aaa" stroke-width="0.9"/></svg>
<div class="a" style="left:1377.5px;top:611px;width:19px;height:18.5px;background:#2c2c2c;border-radius:4px;box-shadow:inset 0 0 0 1px #232323;"></div>
<svg style="left:1378px;top:612px;" width="18" height="17" viewBox="0 0 18 17"><rect x="1.5" y="3" width="3.5" height="3" fill="#3ecf6e"/><rect x="1.5" y="7" width="3.5" height="7" fill="#3ecf6e"/><rect x="6" y="3" width="10" height="6" fill="none" stroke="#3ecf6e" stroke-width="1.2"/><rect x="6" y="10.5" width="10" height="3.5" fill="#3ecf6e"/></svg>
<div class="a" style="left:1400.5px;top:611px;width:19px;height:18.5px;background:#2c2c2c;border-radius:4px;box-shadow:inset 0 0 0 1px #232323;"></div>
<svg style="left:1401px;top:613px;" width="18" height="15" viewBox="0 0 18 15"><path d="M2 3 L6 7.5 L2 12 M7 3 L11 7.5 L7 12 M12 3 L16 7.5 L12 12" fill="none" stroke="#ccc" stroke-width="1.8"/></svg>
<div class="a" style="left:1423.5px;top:611px;width:30.5px;height:18.5px;background:#2c2c2c;border-radius:4px;box-shadow:inset 0 0 0 1px #232323;"></div>
<div class="a" style="left:1442px;top:612px;width:1px;height:16.5px;background:#3a3a3a;"></div>
<svg style="left:1425px;top:613px;" width="16" height="15" viewBox="0 0 16 15"><rect x="1.5" y="2" width="13" height="9.5" fill="none" stroke="#ddd" stroke-width="1.3"/><rect x="1" y="11.5" width="14" height="2" fill="#ddd"/></svg>
<svg style="left:1445px;top:615.5px;" width="8" height="10" viewBox="0 0 8 10"><path d="M1 1.5 L6.5 5 L1 8.5 Z" fill="none" stroke="#aaa" stroke-width="0.9"/></svg>
<div class="a" style="left:1458.5px;top:611px;width:30.5px;height:18.5px;background:#2c2c2c;border-radius:4px;box-shadow:inset 0 0 0 1px #232323;"></div>
<div class="a" style="left:1477px;top:612px;width:1px;height:16.5px;background:#3a3a3a;"></div>
<svg style="left:1460px;top:612.5px;" width="16" height="16" viewBox="0 0 16 16"><rect x="1.5" y="1.5" width="8" height="5.5" fill="none" stroke="#ccc" stroke-width="1"/><path d="M3.5 9 H11.5 V3.5 M5.5 11 H13.5 V5.5 M7.5 13 H15 V7.5" fill="none" stroke="#aaa" stroke-width="1"/></svg>
<svg style="left:1480px;top:615.5px;" width="8" height="10" viewBox="0 0 8 10"><path d="M1 1.5 L6.5 5 L1 8.5 Z" fill="none" stroke="#aaa" stroke-width="0.9"/></svg>
<div class="a" style="left:1493px;top:611px;width:31px;height:18.5px;background:#2c2c2c;border-radius:4px;box-shadow:inset 0 0 0 1px #232323;"></div>
<div class="a" style="left:1512px;top:612px;width:1px;height:16.5px;background:#3a3a3a;"></div>
<svg style="left:1495px;top:612px;" width="16" height="17" viewBox="0 0 16 17"><rect x="1" y="1.5" width="9" height="9" fill="#9a9a9a"/><rect x="5.5" y="6" width="9" height="9" fill="#2c2c2c" stroke="#ddd" stroke-width="1.2"/></svg>
<svg style="left:1515px;top:615.5px;" width="8" height="10" viewBox="0 0 8 10"><path d="M1 1.5 L6.5 5 L1 8.5 Z" fill="none" stroke="#aaa" stroke-width="0.9"/></svg>
<div class="a" style="left:1528px;top:611px;width:31px;height:18.5px;background:#2c2c2c;border-radius:4px;box-shadow:inset 0 0 0 1px #232323;"></div>
<div class="a" style="left:1547px;top:612px;width:1px;height:16.5px;background:#3a3a3a;"></div>
<svg style="left:1530px;top:613px;" width="16" height="16" viewBox="0 0 16 16"><rect x="1.5" y="1.5" width="3" height="3" fill="#3ecf6e"/><rect x="1.5" y="7.5" width="3" height="3" fill="#3ecf6e"/><rect x="1.5" y="13.5" width="3" height="3" fill="#3ecf6e"/><rect x="4.5" y="4.5" width="3" height="3" fill="#3ecf6e"/><rect x="4.5" y="10.5" width="3" height="3" fill="#3ecf6e"/><rect x="7.5" y="1.5" width="3" height="3" fill="#3ecf6e"/><rect x="7.5" y="7.5" width="3" height="3" fill="#3ecf6e"/><rect x="7.5" y="13.5" width="3" height="3" fill="#3ecf6e"/><rect x="10.5" y="4.5" width="3" height="3" fill="#3ecf6e"/><rect x="10.5" y="10.5" width="3" height="3" fill="#3ecf6e"/><rect x="13.5" y="1.5" width="3" height="3" fill="#3ecf6e"/><rect x="13.5" y="7.5" width="3" height="3" fill="#3ecf6e"/><rect x="13.5" y="13.5" width="3" height="3" fill="#3ecf6e"/></svg>
<svg style="left:1550px;top:615.5px;" width="8" height="10" viewBox="0 0 8 10"><path d="M1 1.5 L6.5 5 L1 8.5 Z" fill="none" stroke="#aaa" stroke-width="0.9"/></svg>
<div class="a" style="left:1563.5px;top:611px;width:19px;height:18.5px;background:#2c2c2c;border-radius:4px;box-shadow:inset 0 0 0 1px #232323;"></div>
<svg style="left:1564px;top:611.5px;" width="18" height="18" viewBox="0 0 18 18"><g transform="translate(9 9)"><g fill="#dadada"><rect x="-1.6" y="-7" width="3.2" height="14"/><rect x="-1.6" y="-7" width="3.2" height="14" transform="rotate(45)"/><rect x="-1.6" y="-7" width="3.2" height="14" transform="rotate(90)"/><rect x="-1.6" y="-7" width="3.2" height="14" transform="rotate(135)"/></g><circle r="4.8" fill="#dadada"/><circle r="2.2" fill="#2c2c2c"/></g></svg>
<!-- 40_color.py -->
<div class="t" style="left:1598px;top:90px;font-size:12.5px;color:#e6e6e6;letter-spacing:-0.174px;">Color</div>
<div class="t" style="left:1639px;top:90px;font-size:12.5px;color:#e6e6e6;letter-spacing:-0.523px;">Add Layers</div>
<div class="a" style="left:1900px;top:107px;width:14px;height:428px;background:#2b2b2b;"></div>
<div class="a" style="left:1902px;top:108px;width:10px;height:387px;background:#555555;border-radius:5px;"></div>
<div class="a" style="left:1646px;top:119.5px;width:200px;height:200px;background:conic-gradient(hsl(90,100%,50%) 0deg,hsl(75,100%,50%) 15deg,hsl(60,100%,50%) 30deg,hsl(45,100%,50%) 45deg,hsl(30,100%,50%) 60deg,hsl(15,100%,50%) 75deg,hsl(0,100%,50%) 90deg,hsl(345,100%,50%) 105deg,hsl(330,100%,50%) 120deg,hsl(315,100%,50%) 135deg,hsl(300,100%,50%) 150deg,hsl(285,100%,50%) 165deg,hsl(270,100%,50%) 180deg,hsl(255,100%,50%) 195deg,hsl(240,100%,50%) 210deg,hsl(225,100%,50%) 225deg,hsl(210,100%,50%) 240deg,hsl(195,100%,50%) 255deg,hsl(180,100%,50%) 270deg,hsl(165,100%,50%) 285deg,hsl(150,100%,50%) 300deg,hsl(135,100%,50%) 315deg,hsl(120,100%,50%) 330deg,hsl(105,100%,50%) 345deg,hsl(90,100%,50%) 360deg);border-radius:50%;-webkit-mask:radial-gradient(circle,transparent 74.5px,#000 75.5px,#000 99.5px,transparent 100.5px);mask:radial-gradient(circle,transparent 74.5px,#000 75.5px,#000 99.5px,transparent 100.5px);"></div>
<div class="a" style="left:1702px;top:176px;width:90px;height:90px;background:linear-gradient(to right,#000,rgba(0,0,0,0)),linear-gradient(to bottom,#fff,#f00);"></div>
<svg style="left:1739px;top:169.4px;" width="14" height="14" viewBox="0 0 14 14"><circle cx="7" cy="7" r="6" fill="none" stroke="#d8d8d8" stroke-width="1.2"/></svg>
<svg style="left:1826px;top:213px;" width="14" height="14" viewBox="0 0 14 14"><circle cx="7" cy="7" r="6" fill="none" stroke="#fff" stroke-width="1.2"/></svg>
<div class="a" style="left:1600px;top:333px;width:22px;height:22px;background:#7a7a7a;border-radius:3px;"></div>
<div class="t" style="left:1625px;top:338px;font-size:12.5px;color:#e6e6e6;letter-spacing:-0.521px;">Gray</div>
<div class="a" style="left:1871px;top:333px;width:22px;height:22px;background:#2a2a2a;border-radius:4px;box-shadow:inset 0 0 0 1px #222, 0 1px 0 #222;"></div>
<svg style="left:1871px;top:333px;" width="22" height="22" viewBox="0 0 22 22"><path d="M6 16 L12.5 9.5" stroke="#ccc" stroke-width="1.8" stroke-linecap="round"/><path d="M6 16 L12.5 9.5" stroke="#2a2a2a" stroke-width="0.6"/><path d="M11.5 8.5 L13.5 10.5 M12.5 7.5 L15 5.5 A1.2 1.2 0 0 1 16.5 7 L14.5 9.5" stroke="#ddd" stroke-width="2" fill="none"/></svg>
<div class="a" style="left:1600px;top:360px;width:50px;height:17.5px;background:#3a3a3a;border-radius:3px;box-shadow:inset 0 0 0 1px #333;"></div>
<div class="t" style="left:1603px;top:362.5px;color:#e6e6e6;">Hex</div>
<svg style="left:1635px;top:366.5px;" width="9" height="5" viewBox="0 0 9 5"><path d="M0.5 0.5 L4.5 4.5 L8.5 0.5" fill="none" stroke="#cfcfcf" stroke-width="1"/></svg>
<div class="a" style="left:1653px;top:358.5px;width:240px;height:21.5px;background:#262626;border-radius:3px;"></div>
<div class="t" style="left:1659px;top:363px;color:#555;">#</div>
<div class="t" style="left:1670px;top:363px;font-size:12.5px;color:#e6e6e6;letter-spacing:-0.618px;">7a7a7a</div>
<div class="a" style="left:1600px;top:390px;width:232px;height:4.2px;background:#e4e4e4;border-radius:2px;"></div>
<svg style="left:1828px;top:386px;" width="12" height="12" viewBox="0 0 12 12"><circle cx="6" cy="6" r="5.3" fill="#76ccb4"/><circle cx="6" cy="6" r="2" fill="#5fa591"/></svg>
<div class="a" style="left:1849px;top:384.5px;width:44px;height:15.5px;background:#3a3a3a;border-radius:3px;"></div>
<div class="t" style="left:1853px;top:386px;color:#5a5a5a;">A</div>
<div class="t" style="left:1866px;top:386px;font-size:12.5px;color:#e6e6e6;letter-spacing:0.049px;">255</div>
<div class="a" style="left:1597px;top:406px;width:299px;height:22px;background:#262626;border-radius:3px;"></div>
<div class="a" style="left:1599px;top:408px;width:148px;height:20px;background:#4a4a4a;border-radius:3px 3px 0 0;"></div>
<div class="t" style="left:1648px;top:411px;font-size:12.5px;color:#e6e6e6;letter-spacing:-0.649px;">Swatches</div>
<div class="a" style="left:1749px;top:408px;width:145px;height:20px;background:#2c2c2c;border-radius:3px 3px 0 0;"></div>
<div class="t" style="left:1792px;top:411px;font-size:12.5px;color:#c8c8c8;letter-spacing:-0.142px;">Generator</div>
<div class="a" style="left:1598px;top:431px;width:257px;height:18px;background:#555555;border-radius:3px;"></div>
<div class="a" style="left:1600px;top:432.5px;width:61px;height:15px;background:#2e2e2e;border-radius:3px;"></div>
<svg style="left:1603px;top:434px;" width="12" height="12" viewBox="0 0 12 12"><path d="M1.5 1.5 V10.5 M4 1.5 V10.5" stroke="#3ecf6e" stroke-width="1.5"/><path d="M6.5 1.5 L10.5 10.5" stroke="#ddd" stroke-width="1.5"/></svg>
<div class="t" style="left:1621px;top:434px;font-size:12.5px;color:#e6e6e6;letter-spacing:-0.029px;">Library</div>
<svg style="left:1670px;top:434px;" width="13" height="12" viewBox="0 0 13 12"><rect x="1" y="3" width="11" height="8" fill="#ccc"/><path d="M1 1.5 H6" stroke="#ccc" stroke-width="1.2"/><path d="M3 6 H10 M3 8.5 H10" stroke="#555" stroke-width="0.9"/></svg>
<div class="t" style="left:1686px;top:434px;font-size:12.5px;color:#e6e6e6;letter-spacing:-0.129px;">Project</div>
<svg style="left:1738px;top:434px;" width="12" height="13" viewBox="0 0 12 13"><path d="M1.5 1 H6.5 L10 4.5 V11.5 H1.5 Z M6.5 1 V4.5 H10" fill="none" stroke="#ccc" stroke-width="1"/></svg>
<div class="t" style="left:1753px;top:434px;font-size:12.5px;color:#e6e6e6;letter-spacing:-0.888px;">Scene</div>
<svg style="left:1799px;top:434px;" width="13" height="13" viewBox="0 0 13 13"><path d="M2 2 H11 V8 L8 11 H2 Z M8 11 V8 H11" fill="none" stroke="#ccc" stroke-width="1.1"/></svg>
<div class="t" style="left:1816px;top:434px;font-size:12.5px;color:#e6e6e6;letter-spacing:-0.472px;">Labels</div>
<div class="a" style="left:1859px;top:432px;width:16px;height:16px;background:#2e2e2e;border-radius:3px;"></div>
<svg style="left:1859px;top:432px;" width="16" height="16" viewBox="0 0 16 16"><rect x="4" y="4" width="3.2" height="3.2" fill="#3ecf6e"/><rect x="8.8" y="4" width="3.2" height="3.2" fill="#3ecf6e"/><rect x="4" y="8.8" width="3.2" height="3.2" fill="#3ecf6e"/><rect x="8.8" y="8.8" width="3.2" height="3.2" fill="#3ecf6e"/></svg>
<svg style="left:1879px;top:432px;" width="16" height="16" viewBox="0 0 16 16"><path d="M2.5 4.5 H13.5 M2.5 8 H13.5 M2.5 11.5 H13.5" stroke="#ccc" stroke-width="1.1"/></svg>
<div class="a" style="left:1598px;top:453px;width:275px;height:16px;background:#474747;border-radius:3px;box-shadow:inset 0 0 0 1px #3e3e3e;"></div>
<div class="t" style="left:1601px;top:455px;font-size:12.5px;color:#e6e6e6;letter-spacing:0.058px;">Bright</div>
<svg style="left:1859px;top:459px;" width="9" height="5" viewBox="0 0 9 5"><path d="M0.5 0.5 L4.5 4.5 L8.5 0.5" fill="none" stroke="#cfcfcf" stroke-width="1"/></svg>
<div class="a" style="left:1880px;top:460px;width:2px;height:2px;background:#ccc;border-radius:1px;"></div>
<div class="a" style="left:1884.5px;top:460px;width:2px;height:2px;background:#ccc;border-radius:1px;"></div>
<div class="a" style="left:1889px;top:460px;width:2px;height:2px;background:#ccc;border-radius:1px;"></div>
<div class="a" style="left:1598px;top:470px;width:297px;height:64px;background:#2b2b2b;"></div>
<div class="a" style="left:1600px;top:471.5px;width:18px;height:18px;background:#a95fc9;border-radius:3px;"></div>
<div class="a" style="left:1622px;top:471.5px;width:18px;height:18px;background:#0cc6f1;border-radius:3px;"></div>
<div class="a" style="left:1644px;top:471.5px;width:18px;height:18px;background:#f4e30a;border-radius:3px;"></div>
<div class="a" style="left:1666px;top:471.5px;width:18px;height:18px;background:#f27908;border-radius:3px;"></div>
<div class="a" style="left:1688px;top:471.5px;width:18px;height:18px;background:#ef0808;border-radius:3px;"></div>
<!-- 41_align.py -->
<div class="t" style="left:1598px;top:545.5px;font-size:12.5px;color:#e6e6e6;letter-spacing:0.041px;">Align</div>
<div class="t" style="left:1601px;top:576px;font-size:12.5px;color:#e6e6e6;letter-spacing:-0.287px;">Alignment</div>
<div class="t" style="left:1601px;top:604px;font-size:12.5px;color:#e6e6e6;letter-spacing:0.04px;">Distribution</div>
<div class="a" style="left:1790.5px;top:573px;width:53.1px;height:18px;background:#2c2c2c;border-radius:4px;box-shadow:inset 0 0 0 1px #232323;"></div>
<div class="a" style="left:1808.2px;top:574px;width:1px;height:16px;background:#3a3a3a;"></div>
<div class="a" style="left:1825.9px;top:574px;width:1px;height:16px;background:#3a3a3a;"></div>
<svg style="left:1790.5px;top:573px;" width="17.7" height="18" viewBox="0 0 17.7 18"><path d="M3.5 3 V15" stroke="#ddd" stroke-width="1.2"/><rect x="5" y="5.5" width="9" height="2" fill="#ddd"/><rect x="5" y="10.5" width="6" height="2" fill="#ddd"/></svg>
<svg style="left:1808.2px;top:573px;" width="17.7" height="18" viewBox="0 0 17.7 18"><path d="M8.85 3 V15" stroke="#ddd" stroke-width="1.2"/><rect x="3.5" y="5.5" width="11" height="2" fill="#ddd"/><rect x="5" y="10.5" width="8" height="2" fill="#ddd"/></svg>
<svg style="left:1825.9px;top:573px;" width="17.7" height="18" viewBox="0 0 17.7 18"><path d="M14.5 3 V15" stroke="#ddd" stroke-width="1.2"/><rect x="4" y="5.5" width="9" height="2" fill="#ddd"/><rect x="7" y="10.5" width="6" height="2" fill="#ddd"/></svg>
<div class="a" style="left:1852.5px;top:573px;width:53.1px;height:18px;background:#2c2c2c;border-radius:4px;box-shadow:inset 0 0 0 1px #232323;"></div>
<div class="a" style="left:1870.2px;top:574px;width:1px;height:16px;background:#3a3a3a;"></div>
<div class="a" style="left:1887.9px;top:574px;width:1px;height:16px;background:#3a3a3a;"></div>
<svg style="left:1852.5px;top:573px;" width="17.7" height="18" viewBox="0 0 17.7 18"><path d="M3 3.5 H15" stroke="#ddd" stroke-width="1.2"/><rect x="5.5" y="5" width="2" height="9" fill="#ddd"/><rect x="10.5" y="5" width="2" height="6" fill="#ddd"/></svg>
<svg style="left:1870.2px;top:573px;" width="17.7" height="18" viewBox="0 0 17.7 18"><path d="M3 9 H15" stroke="#ddd" stroke-width="1.2"/><rect x="5.5" y="4" width="2" height="10" fill="#ddd"/><rect x="10.5" y="5.5" width="2" height="7" fill="#ddd"/></svg>
<svg style="left:1887.9px;top:573px;" width="17.7" height="18" viewBox="0 0 17.7 18"><path d="M3 14.5 H15" stroke="#ddd" stroke-width="1.2"/><rect x="5.5" y="4" width="2" height="9" fill="#ddd"/><rect x="10.5" y="7" width="2" height="6" fill="#ddd"/></svg>
<div class="a" style="left:1790.5px;top:601px;width:53.1px;height:18px;background:#2c2c2c;border-radius:4px;box-shadow:inset 0 0 0 1px #232323;"></div>
<div class="a" style="left:1808.2px;top:602px;width:1px;height:16px;background:#3a3a3a;"></div>
<div class="a" style="left:1825.9px;top:602px;width:1px;height:16px;background:#3a3a3a;"></div>
<svg style="left:1790.5px;top:601px;" width="17.7" height="18" viewBox="0 0 17.7 18"><path d="M3.5 3 V15 M14 3 V15" stroke="#ddd" stroke-width="1.2"/><rect x="7.5" y="5" width="2.5" height="8" fill="#ddd"/></svg>
<svg style="left:1808.2px;top:601px;" width="17.7" height="18" viewBox="0 0 17.7 18"><path d="M3 3.5 H15 M3 14.5 H15" stroke="#ddd" stroke-width="1.2"/><rect x="5" y="8" width="8" height="2.5" fill="#ddd"/></svg>
<svg style="left:1825.9px;top:601px;" width="17.7" height="18" viewBox="0 0 17.7 18"><path d="M3 13 L5 13 M13 5 L15 5" stroke="#ddd" stroke-width="1.2"/><rect x="6" y="9" width="2.5" height="3" fill="#ddd"/><rect x="10" y="6" width="2.5" height="3" fill="#ddd"/><path d="M3 15 V11 M15 3 V7" stroke="#ddd" stroke-width="1" stroke-dasharray="1 1"/></svg>
<!-- 50_scene.py -->
<div class="a" style="left:584.5px;top:637px;width:99px;height:22px;background:#262626;border-radius:3px 3px 0 0;"></div>
<div class="a" style="left:685px;top:637px;width:112px;height:22px;background:#262626;border-radius:3px 3px 0 0;"></div>
<div class="t" style="left:500px;top:641.5px;font-size:12.5px;color:#e6e6e6;letter-spacing:-0.448px;">Scene Window</div>
<div class="t" style="left:590px;top:641.5px;font-size:12.5px;color:#e6e6e6;letter-spacing:-0.381px;">JavaScript Editor</div>
<div class="t" style="left:691px;top:641.5px;font-size:12.5px;color:#e6e6e6;letter-spacing:-0.462px;">Dependency Graph</div>
<div class="t" style="left:783px;top:664px;font-size:12.5px;color:#b8b8b8;letter-spacing:-0.354px;">Jumping Text Coloring</div>
<svg style="left:1185px;top:665.5px;" width="11" height="11" viewBox="0 0 11 11"><path d="M1 1 L10 10 M10 1 L1 10" stroke="#9a9a9a" stroke-width="1"/></svg>
<div class="a" style="left:497px;top:683.5px;width:487px;height:19px;background:#262626;border-radius:10px;"></div>
<svg style="left:500px;top:687px;" width="14" height="14" viewBox="0 0 14 14"><g transform="scale(1)"><circle cx="5.5" cy="5.5" r="4.3" fill="none" stroke="#e0e0e0" stroke-width="1.3"/><path d="M8.7 8.7 L11.8 11.8" stroke="#e0e0e0" stroke-width="2" stroke-linecap="round"/></g></svg>
<div class="t" style="left:520px;top:687px;font-size:12.5px;color:#8a8a8a;letter-spacing:-0.311px;">Enter a layer name</div>
<div class="a" style="left:987px;top:683.5px;width:20px;height:19.5px;background:#2c2c2c;border-radius:4px;box-shadow:inset 0 0 0 1px #222, 0 1px 0 #222;"></div>
<svg style="left:987px;top:683.5px;" width="20" height="19.5" viewBox="0 0 20 19.5"><path d="M10 4.5 V15 M4.8 9.75 H15.2" stroke="#eee" stroke-width="1.7"/><path d="M16.5 18 L19 15.5 V18 Z" fill="#5ec9a9"/></svg>
<div class="a" style="left:1031.5px;top:683px;width:19px;height:19.5px;background:#2c2c2c;border-radius:4px;box-shadow:inset 0 0 0 1px #222, 0 1px 0 #222;"></div>
<div class="a" style="left:1053.5px;top:683px;width:19px;height:19.5px;background:#2c2c2c;border-radius:4px;box-shadow:inset 0 0 0 1px #222, 0 1px 0 #222;"></div>
<div class="a" style="left:1075.5px;top:683px;width:19px;height:19.5px;background:#2c2c2c;border-radius:4px;box-shadow:inset 0 0 0 1px #222, 0 1px 0 #222;"></div>
<svg style="left:1031.5px;top:683px;" width="19" height="19.5" viewBox="0 0 19 19.5"><circle cx="11.5" cy="7" r="4.5" fill="#d8d8d8"/><path d="M4 13 A5 5 0 0 1 8 8 M5 15.5 A6 6 0 0 1 9 10 M6.5 17.5 A6 6 0 0 1 10.5 12" fill="none" stroke="#666" stroke-width="1.2"/></svg>
<svg style="left:1053.5px;top:683px;" width="19" height="19.5" viewBox="0 0 19 19.5"><circle cx="5" cy="4.5" r="1.2" fill="#ccc"/><circle cx="12" cy="4.5" r="1.2" fill="#ccc"/><circle cx="5" cy="11" r="1.2" fill="#ccc"/><path d="M12 7.5 L12.8 10.5 L15.8 11.3 L12.8 12.1 L12 15 L11.2 12.1 L8.2 11.3 L11.2 10.5 Z" fill="#eee"/><path d="M16.5 18 L19 15.5 V18 Z" fill="#5ec9a9"/></svg>
<svg style="left:1075.5px;top:683px;" width="19" height="19.5" viewBox="0 0 19 19.5"><path d="M2 5 H16 M2 9.8 H16 M2 14.5 H16" stroke="#ccc" stroke-width="1"/><circle cx="6" cy="5" r="1.8" fill="#2c2c2c" stroke="#ccc" stroke-width="1"/><circle cx="10" cy="9.8" r="1.8" fill="#2c2c2c" stroke="#ccc" stroke-width="1"/><circle cx="6" cy="14.5" r="1.8" fill="#2c2c2c" stroke="#ccc" stroke-width="1"/></svg>
<div class="a" style="left:1092px;top:679px;width:103px;height:28px;background:#262626;border-radius:0px;border:3.5px solid #c3ee1c;"></div>
<div class="t" style="left:1102px;top:687px;color:#555;">F</div>
<div class="t" style="left:1114px;top:687px;color:#ececec;">60</div>
<svg style="left:499px;top:707px;" width="11" height="13" viewBox="0 0 11 13"><path d="M2.5 6 V4 A3 3 0 0 1 8.5 4 V6" fill="none" stroke="#ddd" stroke-width="1.4"/><rect x="1" y="6" width="9" height="6.5" fill="#ddd"/><circle cx="5.5" cy="9.2" r="1" fill="#444"/></svg>
<svg style="left:516px;top:708px;" width="16" height="11" viewBox="0 0 16 11"><path d="M1 5.5 C4 1 12 1 15 5.5 C12 10 4 10 1 5.5 Z" fill="none" stroke="#ccc" stroke-width="1.1"/><circle cx="8" cy="5.5" r="2" fill="#ccc"/></svg>
<svg style="left:536px;top:706.5px;" width="15" height="15" viewBox="0 0 15 15"><path d="M7.5 1 L13.5 4 V11 L7.5 14 L1.5 11 V4 Z M1.5 4 L7.5 7 L13.5 4 M7.5 7 V14" fill="none" stroke="#ccc" stroke-width="1.1"/></svg>
<svg style="left:555px;top:707px;" width="15" height="14" viewBox="0 0 15 14"><path d="M1 4.5 H3.5 L7 1.5 V12.5 L3.5 9.5 H1 Z" fill="#ddd"/><path d="M9 4.5 Q10.5 7 9 9.5 M11 2.5 Q14 7 11 11.5" fill="none" stroke="#ddd" stroke-width="1.2"/></svg>
<svg style="left:574px;top:706.5px;" width="14" height="14" viewBox="0 0 14 14"><path d="M2 12 L8.5 5.5" stroke="#aaa" stroke-width="1.8" stroke-linecap="round"/><path d="M2 12 L8.5 5.5" stroke="#404040" stroke-width="0.6"/><path d="M7.5 4.5 L9.5 6.5 M8.5 3.5 L11 1.5 A1.2 1.2 0 0 1 12.5 3 L10.5 5.5" stroke="#bbb" stroke-width="2" fill="none"/></svg>
<svg style="left:593px;top:709px;" width="15" height="10" viewBox="0 0 15 10"><path d="M0.5 5 L4.5 0.8 H14.5 V9.2 H4.5 Z" fill="#dcdcdc"/><circle cx="5" cy="5" r="1.6" fill="#404040"/></svg>
<div class="t" style="left:649px;top:708px;font-size:12.5px;color:#e6e6e6;letter-spacing:-0.585px;">Name</div>
<div class="a" style="left:494px;top:723px;width:687px;height:21.5px;background:#2f2f2f;"></div>
<div class="a" style="left:496px;top:726px;width:17px;height:16.5px;background:#262626;border-radius:3px;"></div>
<div class="a" style="left:515px;top:726px;width:17px;height:16.5px;background:#262626;border-radius:3px;"></div>
<svg style="left:515px;top:726px;" width="17" height="16.5" viewBox="0 0 17 16.5"><path d="M12.3 5.5 A4.6 4.6 0 1 1 10.8 3.8" fill="none" stroke="#ccc" stroke-width="1.1"/><path d="M5.5 8 L7.8 10.3 L12.8 4.8" fill="none" stroke="#ddd" stroke-width="1.5"/></svg>
<div class="a" style="left:573px;top:726px;width:16px;height:16.5px;background:#6b90e8;border-radius:3px;"></div>
<svg style="left:593px;top:729px;" width="15" height="10" viewBox="0 0 15 10"><path d="M0.5 5 L4.5 0.8 H14.5 V9.2 H4.5 Z" fill="#dcdcdc"/><circle cx="5" cy="5" r="1.6" fill="#333"/></svg>
<div class="a" style="left:610px;top:726px;width:14.5px;height:16.5px;background:#2a2a2a;border-radius:3px;"></div>
<svg style="left:613px;top:732.5px;" width="8" height="4.5" viewBox="0 0 8 4.5"><path d="M0.5 0.5 L4 4 L7.5 0.5" fill="none" stroke="#777" stroke-width="1"/></svg>
<div class="a" style="left:626px;top:726px;width:15px;height:16.5px;background:#2a2a2a;border-radius:3px;"></div>
<div class="a" style="left:630.5px;top:730.5px;width:7px;height:7px;background:#e6e6e6;border-radius:50%;"></div>
<svg style="left:647px;top:726px;" width="17" height="17" viewBox="0 0 17 17"><path d="M2.2 6.5 A6.8 6.8 0 0 1 14.8 6.5" fill="none" stroke="#dcdcdc" stroke-width="1"/><path d="M2.2 12 A6.8 6.8 0 0 0 14.8 12" fill="none" stroke="#dcdcdc" stroke-width="1"/><text x="8.5" y="10.3" font-size="8.8" fill="#b0dcff" text-anchor="middle" font-family="Liberation Sans" letter-spacing="-0.4">abc</text><path d="M1.2 10.6 H15.8" stroke="#b0dcff" stroke-width="0.8"/></svg>
<div class="t" style="left:667px;top:728px;font-size:12.5px;color:#e6e6e6;letter-spacing:-0.275px;">String Manipulator [Cavalry Typing Text 01]</div>
<div class="a" style="left:1139.5px;top:726px;width:20.5px;height:16.5px;background:#2a2a2a;border-radius:3px;"></div>
<div class="a" style="left:1150px;top:726.5px;width:9.5px;height:15.5px;background:transparent;border-radius:2px;border:1px solid #9a58b8;"></div>
<svg style="left:1139.5px;top:726px;" width="20.5" height="16.5" viewBox="0 0 20.5 16.5"><path d="M2 8.2 L4.5 5.2 H7.5 V11.2 H4.5 Z" fill="#7a7a7a"/><path d="M17.8 8.2 L15.3 5.2 H12.3 V11.2 H15.3 Z" fill="#c85ee8"/></svg>
<svg style="left:1164px;top:727.9px;" width="12" height="12" viewBox="0 0 12 12"><circle cx="6" cy="6" r="5" fill="none" stroke="#666" stroke-width="1.2"/></svg>
<div class="a" style="left:494px;top:744.5px;width:687px;height:23px;background:#2f2f2f;"></div>
<svg style="left:632px;top:744px;" width="14" height="14" viewBox="0 0 14 14"><path d="M2.5 0 V11.5 H11" fill="none" stroke="#bbb" stroke-width="1" stroke-dasharray="1 1"/></svg>
<div class="t" style="left:647px;top:750px;font-size:12.5px;color:#e6e6e6;letter-spacing:-0.489px;">Resize String.Percentage</div>
<div class="a" style="left:1070.5px;top:742px;width:109.5px;height:27.5px;background:transparent;border-radius:0px;border:3.4px solid #c3ee1c;"></div>
<div class="a" style="left:1081px;top:748px;width:84px;height:16px;background:#262626;border-radius:3px;"></div>
<div class="t" style="left:1084px;top:750px;color:#6f6f6f;">%</div>
<div class="t" style="left:1099px;top:750px;font-size:12.5px;color:#ececec;letter-spacing:-0.455px;">100.0</div>
<svg style="left:1152px;top:751px;" width="10" height="10" viewBox="0 0 10 10"><path d="M5 0.8 L9.2 5 L5 9.2 L0.8 5 Z" fill="#2fc46e"/></svg>
<div class="a" style="left:1165px;top:748px;width:11px;height:16px;background:#3a3a3a;border-radius:0 3px 3px 0;"></div>
<svg style="left:1166px;top:751px;" width="8" height="10" viewBox="0 0 8 10"><path d="M1 1 H4 L7 5 L4 9 H1 Z" fill="#777"/></svg>
<div class="a" style="left:494px;top:767.5px;width:683px;height:20.5px;background:#48434f;border-radius:0 0 3px 0;"></div>
<div class="a" style="left:496px;top:769.5px;width:17px;height:17px;background:#262626;border-radius:3px;"></div>
<div class="a" style="left:515px;top:769.5px;width:17px;height:17px;background:#262626;border-radius:3px;"></div>
<div class="a" style="left:534px;top:769.5px;width:17px;height:17px;background:#262626;border-radius:3px;"></div>
<svg style="left:515px;top:769.5px;" width="17" height="17" viewBox="0 0 17 17"><path d="M1.5 8.5 C4.5 4 12.5 4 15.5 8.5 C12.5 13 4.5 13 1.5 8.5 Z" fill="none" stroke="#ccc" stroke-width="1.1"/><circle cx="8.5" cy="8.5" r="2.2" fill="#ccc"/></svg>
<div class="a" style="left:573px;top:769.5px;width:16px;height:17px;background:#b98cf5;border-radius:3px;"></div>
<svg style="left:593px;top:773px;" width="15" height="10" viewBox="0 0 15 10"><path d="M0.5 5 L4.5 0.8 H14.5 V9.2 H4.5 Z" fill="#dcdcdc"/><circle cx="5" cy="5" r="1.6" fill="#48434f"/></svg>
<svg style="left:647px;top:770px;" width="17" height="17" viewBox="0 0 17 17"><path d="M1.5 3 V14 M15.5 3 V14 M3 1.5 H14 M3 15.5 H14" stroke="#cfcfcf" stroke-width="1" stroke-dasharray="1.2 1.2"/><rect x="0.2" y="0.2" width="2.8" height="2.8" fill="#e6e6e6"/><rect x="14" y="0.2" width="2.8" height="2.8" fill="#e6e6e6"/><rect x="0.2" y="14" width="2.8" height="2.8" fill="#e6e6e6"/><rect x="14" y="14" width="2.8" height="2.8" fill="#e6e6e6"/><path d="M4.5 4.8 H12.5 M8.5 4.8 V12.8" stroke="#e8d56a" stroke-width="2"/></svg>
<div class="t" style="left:667px;top:772px;font-size:12.5px;color:#ececec;letter-spacing:-0.363px;">Cavalry Typing Text 01</div>
<div class="a" style="left:1139.5px;top:770px;width:20.5px;height:16.5px;background:#2a2a2a;border-radius:3px;"></div>
<div class="a" style="left:1149.5px;top:771px;width:0.8px;height:14.5px;background:#48434f;"></div>
<svg style="left:1139.5px;top:770px;" width="20.5" height="16.5" viewBox="0 0 20.5 16.5"><path d="M2 8.2 L4.5 5.2 H7.5 V11.2 H4.5 Z" fill="#e0c86a"/><path d="M17.8 8.2 L15.3 5.2 H12.3 V11.2 H15.3 Z" fill="#7a7a7a"/></svg>
<svg style="left:1164px;top:771.9px;" width="12" height="12" viewBox="0 0 12 12"><circle cx="6" cy="6" r="5" fill="none" stroke="#666" stroke-width="1.2"/></svg>
<div class="a" style="left:1194px;top:833px;width:1.2px;height:16px;background:repeating-linear-gradient(#9a9a9a 0 1px,transparent 1px 2px);"></div>
<div class="a" style="left:1181px;top:724px;width:10.5px;height:237px;background:#4a4a4a;border-radius:5px;"></div>
<div class="a" style="left:495px;top:963.5px;width:683px;height:11px;background:#505050;border-radius:5.5px;"></div>
<div class="a" style="left:497px;top:977px;width:19.5px;height:19.5px;background:#2a2a2a;border-radius:4px;box-shadow:inset 0 0 0 1px #222, 0 1px 0 #222;"></div>
<svg style="left:499.5px;top:982px;" width="15" height="10" viewBox="0 0 15 10"><path d="M0.5 5 L4.5 0.8 H14.5 V9.2 H4.5 Z" fill="#dcdcdc"/><circle cx="5" cy="5" r="1.6" fill="#2a2a2a"/></svg>
<div class="t" style="left:520px;top:981px;font-size:12.5px;color:#e6e6e6;letter-spacing:-0.498px;">1 selected</div>
<div class="a" style="left:984.5px;top:977px;width:18.5px;height:19.5px;background:#2a2a2a;border-radius:4px;box-shadow:inset 0 0 0 1px #222, 0 1px 0 #222;"></div>
<svg style="left:984.5px;top:977px;" width="18.5" height="19.5" viewBox="0 0 18.5 19.5"><rect x="3.5" y="4" width="11" height="11" fill="none" stroke="#bbb" stroke-width="1.2"/><circle cx="9" cy="9.5" r="1.8" fill="#ddd"/></svg>
<div class="a" style="left:1007.5px;top:978px;width:182.5px;height:18px;background:#4c4c4c;border-radius:4px;"></div>
<div class="a" style="left:1008.5px;top:979px;width:85.5px;height:16.5px;background:#2a2a2a;border-radius:3px;"></div>
<svg style="left:1012px;top:980px;" width="16" height="14" viewBox="0 0 16 14"><path d="M4 2.5 H14 M1.5 7 H11.5 M4 11.5 H14" stroke="#3ecf6e" stroke-width="2"/></svg>
<div class="t" style="left:1030px;top:981px;font-size:12.5px;color:#e6e6e6;letter-spacing:-0.222px;">Time Editor</div>
<svg style="left:1101px;top:979px;" width="16" height="16" viewBox="0 0 16 16"><path d="M2.5 1.5 V14 H14.5" fill="none" stroke="#bbb" stroke-width="1"/><path d="M2.5 12.5 L13 5" stroke="#bbb" stroke-width="1"/></svg>
<div class="t" style="left:1119px;top:981px;font-size:12.5px;color:#dcdcdc;letter-spacing:-0.322px;">Graph Editor</div>
<!-- 51_timeline.py -->
<div class="t" style="left:1484px;top:664.5px;font-size:12.5px;color:#e0e0e0;letter-spacing:-0.385px;">Jumping Text Coloring 1</div>
<svg style="left:1890.5px;top:665.5px;" width="11" height="11" viewBox="0 0 11 11"><path d="M1 1 L10 10 M10 1 L1 10" stroke="#9a9a9a" stroke-width="1"/></svg>
<svg style="left:1200px;top:681px;" width="714" height="24" viewBox="0 0 714 24"><rect x="6.50" y="16.5" width="1" height="7.5" fill="#9a9a9a"/><rect x="18.17" y="20" width="1" height="4" fill="#8a8a8a"/><rect x="29.85" y="20" width="1" height="4" fill="#8a8a8a"/><rect x="41.53" y="20" width="1" height="4" fill="#8a8a8a"/><rect x="53.20" y="20" width="1" height="4" fill="#8a8a8a"/><rect x="64.88" y="16.5" width="1" height="7.5" fill="#9a9a9a"/><rect x="76.55" y="20" width="1" height="4" fill="#8a8a8a"/><rect x="88.22" y="20" width="1" height="4" fill="#8a8a8a"/><rect x="99.90" y="20" width="1" height="4" fill="#8a8a8a"/><rect x="111.58" y="20" width="1" height="4" fill="#8a8a8a"/><rect x="123.25" y="16.5" width="1" height="7.5" fill="#9a9a9a"/><rect x="134.92" y="20" width="1" height="4" fill="#8a8a8a"/><rect x="146.60" y="20" width="1" height="4" fill="#8a8a8a"/><rect x="158.28" y="20" width="1" height="4" fill="#8a8a8a"/><rect x="169.95" y="20" width="1" height="4" fill="#8a8a8a"/><rect x="181.62" y="16.5" width="1" height="7.5" fill="#9a9a9a"/><rect x="193.30" y="20" width="1" height="4" fill="#8a8a8a"/><rect x="204.97" y="20" width="1" height="4" fill="#8a8a8a"/><rect x="216.65" y="20" width="1" height="4" fill="#8a8a8a"/><rect x="228.33" y="20" width="1" height="4" fill="#8a8a8a"/><rect x="240.00" y="16.5" width="1" height="7.5" fill="#9a9a9a"/><rect x="251.67" y="20" width="1" height="4" fill="#8a8a8a"/><rect x="263.35" y="20" width="1" height="4" fill="#8a8a8a"/><rect x="275.03" y="20" width="1" height="4" fill="#8a8a8a"/><rect x="286.70" y="20" width="1" height="4" fill="#8a8a8a"/><rect x="298.38" y="16.5" width="1" height="7.5" fill="#9a9a9a"/><rect x="310.05" y="20" width="1" height="4" fill="#8a8a8a"/><rect x="321.72" y="20" width="1" height="4" fill="#8a8a8a"/><rect x="333.40" y="20" width="1" height="4" fill="#8a8a8a"/><rect x="345.08" y="20" width="1" height="4" fill="#8a8a8a"/><rect x="356.75" y="16.5" width="1" height="7.5" fill="#9a9a9a"/><rect x="368.42" y="20" width="1" height="4" fill="#8a8a8a"/><rect x="380.10" y="20" width="1" height="4" fill="#8a8a8a"/><rect x="391.78" y="20" width="1" height="4" fill="#8a8a8a"/><rect x="403.45" y="20" width="1" height="4" fill="#8a8a8a"/><rect x="415.12" y="16.5" width="1" height="7.5" fill="#9a9a9a"/><rect x="426.80" y="20" width="1" height="4" fill="#8a8a8a"/><rect x="438.47" y="20" width="1" height="4" fill="#8a8a8a"/><rect x="450.15" y="20" width="1" height="4" fill="#8a8a8a"/><rect x="461.83" y="20" width="1" height="4" fill="#8a8a8a"/><rect x="473.50" y="16.5" width="1" height="7.5" fill="#9a9a9a"/><rect x="485.17" y="20" width="1" height="4" fill="#8a8a8a"/><rect x="496.85" y="20" width="1" height="4" fill="#8a8a8a"/><rect x="508.53" y="20" width="1" height="4" fill="#8a8a8a"/><rect x="520.20" y="20" width="1" height="4" fill="#8a8a8a"/><rect x="531.88" y="16.5" width="1" height="7.5" fill="#9a9a9a"/><rect x="543.55" y="20" width="1" height="4" fill="#8a8a8a"/><rect x="555.22" y="20" width="1" height="4" fill="#8a8a8a"/><rect x="566.90" y="20" width="1" height="4" fill="#8a8a8a"/><rect x="578.58" y="20" width="1" height="4" fill="#8a8a8a"/><rect x="590.25" y="16.5" width="1" height="7.5" fill="#9a9a9a"/><rect x="601.93" y="20" width="1" height="4" fill="#8a8a8a"/><rect x="613.60" y="20" width="1" height="4" fill="#8a8a8a"/><rect x="625.28" y="20" width="1" height="4" fill="#8a8a8a"/><rect x="636.95" y="20" width="1" height="4" fill="#8a8a8a"/><rect x="648.62" y="16.5" width="1" height="7.5" fill="#9a9a9a"/><rect x="660.30" y="20" width="1" height="4" fill="#8a8a8a"/><rect x="671.97" y="20" width="1" height="4" fill="#8a8a8a"/><rect x="683.65" y="20" width="1" height="4" fill="#8a8a8a"/><rect x="695.33" y="20" width="1" height="4" fill="#8a8a8a"/><rect x="707.00" y="16.5" width="1" height="7.5" fill="#9a9a9a"/></svg>
<div class="t" style="left:1185.3px;top:683px;font-size:12px;color:#dedede;letter-spacing:-0.2px;width:40px;text-align:center;">0</div>
<div class="t" style="left:1245.38px;top:683px;font-size:12px;color:#dedede;letter-spacing:-0.2px;width:40px;text-align:center;">10</div>
<div class="t" style="left:1303.75px;top:683px;font-size:12px;color:#dedede;letter-spacing:-0.2px;width:40px;text-align:center;">20</div>
<div class="t" style="left:1362.12px;top:683px;font-size:12px;color:#dedede;letter-spacing:-0.2px;width:40px;text-align:center;">30</div>
<div class="t" style="left:1420.5px;top:683px;font-size:12px;color:#dedede;letter-spacing:-0.2px;width:40px;text-align:center;">40</div>
<div class="t" style="left:1478.88px;top:683px;font-size:12px;color:#dedede;letter-spacing:-0.2px;width:40px;text-align:center;">50</div>
<div class="t" style="left:1537.25px;top:683px;font-size:12px;color:#dedede;letter-spacing:-0.2px;width:40px;text-align:center;">60</div>
<div class="t" style="left:1595.62px;top:683px;font-size:12px;color:#dedede;letter-spacing:-0.2px;width:40px;text-align:center;">70</div>
<div class="t" style="left:1654px;top:683px;font-size:12px;color:#dedede;letter-spacing:-0.2px;width:40px;text-align:center;">80</div>
<div class="t" style="left:1712.38px;top:683px;font-size:12px;color:#dedede;letter-spacing:-0.2px;width:40px;text-align:center;">90</div>
<div class="t" style="left:1770.75px;top:683px;font-size:12px;color:#dedede;letter-spacing:-0.2px;width:40px;text-align:center;">100</div>
<div class="t" style="left:1829.12px;top:683px;font-size:12px;color:#dedede;letter-spacing:-0.2px;width:40px;text-align:center;">110</div>
<div class="t" style="left:1887.5px;top:683px;font-size:12px;color:#dedede;letter-spacing:-0.2px;width:40px;text-align:center;">120</div>
<div class="a" style="left:1914px;top:681px;width:6px;height:24px;background:#1b1b1b;"></div>
<div class="a" style="left:1202px;top:704px;width:5.5px;height:18px;background:#78ccb2;border-radius:1.5px;box-shadow:0 0 0 1px #161010;"></div>
<div class="a" style="left:1907.5px;top:704px;width:5.5px;height:18px;background:#78ccb2;border-radius:1.5px;box-shadow:0 0 0 1px #161010;"></div>
<div class="a" style="left:1200px;top:721px;width:7px;height:241px;background:#1f1f1f;"></div>
<div class="a" style="left:1907.5px;top:721px;width:6.5px;height:241px;background:#232323;"></div>
<div class="a" style="left:1207px;top:724px;width:705px;height:18.7px;background:#5d86dc;border-radius:0px;background-image:repeating-linear-gradient(135deg,#7ba7ff 0px,#6c95eb 1.3px,#6690e5 12.5px,#7aa5fc 12.55px,#5e87db 13.8px,#5881d4 25.1px);"></div>
<div class="t" style="left:1215px;top:727px;font-size:12.5px;color:#ffffff;letter-spacing:-0.206px;text-shadow:0 0 2px rgba(0,0,0,.35);">String Manipulator [Cavalry Typing Text 01]</div>
<div class="a" style="left:1907.5px;top:724px;width:5px;height:18.7px;background:rgba(0,0,0,0.25);"></div>
<div class="a" style="left:1211px;top:752.8px;width:341px;height:2.4px;background:#5b8ae8;"></div>
<svg style="left:1201.5px;top:749px;" width="11" height="11" viewBox="0 0 11 11"><path d="M5.5 0.8 L10.2 5.5 L5.5 10.2 L0.8 5.5 Z" fill="#a9a9a9"/><path d="M5.5 0.8 L0.8 5.5 L5.5 10.2 Z" fill="#c4c4c4"/></svg>
<svg style="left:1551.5px;top:749px;" width="11" height="11" viewBox="0 0 11 11"><path d="M5.5 0.8 L10.2 5.5 L5.5 10.2 L0.8 5.5 Z" fill="#a9a9a9"/><path d="M5.5 0.8 L0.8 5.5 L5.5 10.2 Z" fill="#c4c4c4"/></svg>
<div class="a" style="left:1207px;top:768.3px;width:706px;height:18.4px;background:#c9a3f3;border-radius:2.5px;box-shadow:inset 0 0 0 1px #ecdcfc;background-image:radial-gradient(circle at 1.5px 1.5px,#9f6ee6 0.9px,rgba(159,110,230,0) 1.3px);background-size:3px 3px;"></div>
<div class="t" style="left:1215px;top:771.5px;font-size:12.5px;color:#ffffff;letter-spacing:-0.227px;text-shadow:0 0 2px rgba(80,40,140,.6);">Cavalry Typing Text 01</div>
<div class="a" style="left:1556.5px;top:704px;width:1.2px;height:258px;background:#5ec9a9;"></div>
<svg style="left:1550px;top:696px;" width="14" height="10" viewBox="0 0 14 10"><path d="M0.5 1 H13.5 L9 9 H5 Z" fill="#5ec9a9"/></svg>
<div class="a" style="left:1215px;top:963.5px;width:646px;height:11px;background:#505050;border-radius:5.5px;"></div>
<div class="a" style="left:1203.5px;top:978.5px;width:17px;height:17px;background:#2a2a2a;border-radius:4px;box-shadow:inset 0 0 0 1px #222, 0 1px 0 #222;"></div>
<svg style="left:1203.5px;top:978.5px;" width="17" height="17" viewBox="0 0 17 17"><path d="M2.5 3.5 H14.5 M2.5 7.5 H14.5 M2.5 11.5 H8 M10 11.5 H11" stroke="#ddd" stroke-width="1.5"/><path d="M14 16.5 L16.5 14 V16.5 Z" fill="#5ec9a9"/></svg>
<div class="a" style="left:1224px;top:979px;width:149.5px;height:16px;background:#262626;border-radius:3px;"></div>
<div class="t" style="left:1227px;top:981px;font-size:12.5px;color:#ececec;letter-spacing:-0.377px;">Default Keyframe Layer</div>
<div class="a" style="left:1380px;top:979px;width:68px;height:16px;background:#2b2b2b;border-radius:3px;"></div>
<div class="t" style="left:1385px;top:981px;color:#555;">F</div>
<div class="t" style="left:1397px;top:981px;color:#bbb;">-</div>
<div class="t" style="left:1456px;top:981px;font-size:12.5px;color:#e0e0e0;letter-spacing:-0.211px;">Align:</div>
<div class="a" style="left:1492.5px;top:978.5px;width:52.5px;height:17px;background:#2c2c2c;border-radius:4px;box-shadow:inset 0 0 0 1px #222, 0 1px 0 #222;"></div>
<div class="a" style="left:1510px;top:979.5px;width:1px;height:15px;background:#3a3a3a;"></div>
<div class="a" style="left:1527.5px;top:979.5px;width:1px;height:15px;background:#3a3a3a;"></div>
<svg style="left:1492.5px;top:978.5px;" width="17.5" height="17" viewBox="0 0 17.5 17"><path d="M2.5 3 V14" stroke="#ccc" stroke-width="1"/><path d="M4.5 5 H6 M7.5 5 H9" stroke="#5ec9a9" stroke-width="1.3"/><rect x="4.5" y="9.5" width="9" height="2" fill="#ddd"/></svg>
<svg style="left:1510px;top:978.5px;" width="17.5" height="17" viewBox="0 0 17.5 17"><path d="M8.75 2.5 V14.5" stroke="#ccc" stroke-width="1"/><path d="M3 6 H14.5" stroke="#ddd" stroke-width="1.6"/><path d="M3 10.5 H14.5" stroke="#ddd" stroke-width="1.6"/><circle cx="8.75" cy="8.5" r="1.3" fill="#5ec9a9"/></svg>
<svg style="left:1527.5px;top:978.5px;" width="17.5" height="17" viewBox="0 0 17.5 17"><path d="M15 3 V14" stroke="#ccc" stroke-width="1"/><path d="M10 5 H11.5 M12.5 5 H14" stroke="#5ec9a9" stroke-width="1.3"/><rect x="4" y="9.5" width="9" height="2" fill="#ddd"/></svg>
<div class="a" style="left:1550px;top:978.5px;width:16.5px;height:17px;background:#2c2c2c;border-radius:4px;box-shadow:inset 0 0 0 1px #222, 0 1px 0 #222;"></div>
<svg style="left:1550px;top:978.5px;" width="16.5" height="17" viewBox="0 0 16.5 17"><rect x="3.5" y="3.5" width="9.5" height="10" fill="none" stroke="#bbb" stroke-width="1" stroke-dasharray="2 1"/><rect x="2.5" y="2.5" width="2.5" height="2.5" fill="#ddd"/><rect x="11.5" y="2.5" width="2.5" height="2.5" fill="#ddd"/><rect x="2.5" y="12" width="2.5" height="2.5" fill="#ddd"/><rect x="11.5" y="12" width="2.5" height="2.5" fill="#ddd"/><circle cx="8.25" cy="8.5" r="1.2" fill="#ddd"/></svg>
<div class="a" style="left:1570.5px;top:978.5px;width:30.5px;height:17px;background:#2c2c2c;border-radius:4px;box-shadow:inset 0 0 0 1px #222, 0 1px 0 #222;"></div>
<div class="a" style="left:1588px;top:979.5px;width:1px;height:15px;background:#3a3a3a;"></div>
<svg style="left:1572px;top:979px;" width="15" height="15" viewBox="0 0 15 15"><path d="M3 11 V7 A4.5 4.5 0 0 1 12 7 V11" fill="none" stroke="#ddd" stroke-width="2.4" transform="rotate(-40 7.5 8)"/></svg>
<svg style="left:1591px;top:982px;" width="8" height="10" viewBox="0 0 8 10"><path d="M1 1.5 L6.5 5 L1 8.5 Z" fill="none" stroke="#aaa" stroke-width="0.9"/></svg>
<div class="a" style="left:1605.5px;top:978.5px;width:30.5px;height:17px;background:#2c2c2c;border-radius:4px;box-shadow:inset 0 0 0 1px #222, 0 1px 0 #222;"></div>
<div class="a" style="left:1623px;top:979.5px;width:1px;height:15px;background:#3a3a3a;"></div>
<svg style="left:1606px;top:979px;" width="17" height="15" viewBox="0 0 17 15"><path d="M1 7.5 H5 M6.5 4 V11 M8.5 2 V13 M10.5 5 V10 M12 7.5 H16" stroke="#ccc" stroke-width="1"/></svg>
<svg style="left:1626px;top:982px;" width="8" height="10" viewBox="0 0 8 10"><path d="M1 1.5 L6.5 5 L1 8.5 Z" fill="none" stroke="#aaa" stroke-width="0.9"/></svg>
<svg style="left:1742px;top:979px;" width="17" height="17" viewBox="0 0 17 17"><circle cx="7" cy="7" r="5.5" fill="none" stroke="#ccc" stroke-width="1.1"/><path d="M4.5 7 H9.5" stroke="#ccc" stroke-width="1.1"/><path d="M11 11 L14 14" stroke="#ccc" stroke-width="1.6"/></svg>
<div class="a" style="left:1762.5px;top:985px;width:118.5px;height:4px;background:#333;border-radius:2px;"></div>
<div class="a" style="left:1762.5px;top:985px;width:61px;height:4px;background:#e4e4e4;border-radius:2px;"></div>
<svg style="left:1818px;top:981px;" width="12" height="12" viewBox="0 0 12 12"><circle cx="6" cy="6" r="5.3" fill="#76ccb4"/><circle cx="6" cy="6" r="2" fill="#5fa591"/></svg>
<svg style="left:1886px;top:979px;" width="17" height="17" viewBox="0 0 17 17"><circle cx="7" cy="7" r="5.5" fill="none" stroke="#ccc" stroke-width="1.1"/><path d="M4.5 7 H9.5 M7 4.5 V9.5" stroke="#ccc" stroke-width="1.1"/><path d="M11 11 L14 14" stroke="#ccc" stroke-width="1.6"/></svg>
<!-- 60_status.py -->
<div class="a" style="left:498px;top:1009.5px;width:2px;height:2px;background:#8a8a8a;border-radius:1px;"></div>
<div class="a" style="left:498px;top:1014px;width:2px;height:2px;background:#8a8a8a;border-radius:1px;"></div>
<div class="a" style="left:498px;top:1018.5px;width:2px;height:2px;background:#8a8a8a;border-radius:1px;"></div>
<div class="a" style="left:506.5px;top:1006px;width:18px;height:18px;background:#2a2a2a;border-radius:4px;box-shadow:inset 0 0 0 1px #222, 0 1px 0 #222;"></div>
<svg style="left:506.5px;top:1006px;" width="18" height="18" viewBox="0 0 18 18"><path d="M2.5 3 H15.5 V12 H12 L13.5 15 L9 12 H2.5 Z" fill="#e0e0e0"/><path d="M5 5.5 H13 M5 8 H13 M5 10.2 H11" stroke="#2a2a2a" stroke-width="0.9"/><path d="M15.5 17.5 L18 15 V17.5 Z" fill="#5ec9a9"/></svg>
<div class="a" style="left:528px;top:1008px;width:18.5px;height:14px;background:#d66e6e;border-radius:2px;"></div>
<div class="t" style="left:533.5px;top:1009px;font-size:12px;color:#2a1010;">5</div>
<div class="a" style="left:553.5px;top:1011.5px;width:6px;height:6px;background:#d66e6e;border-radius:50%;"></div>
<div class="t" style="left:565px;top:1009px;font-size:12.5px;color:#e6e6e6;letter-spacing:-0.47px;">Save reminder: 99 minutes since your last save.</div>
<div class="t" style="left:1360px;top:1008.5px;font-size:12.5px;color:#e0e0e0;letter-spacing:-0.996px;font-style:italic;">Click to see next message</div>
<div class="a" style="left:1488px;top:1006.2px;width:80px;height:17.6px;background:#d4c07a;border-radius:2px;"></div>
<div class="t" style="left:1493.5px;top:1009px;font-size:12.5px;color:#2e2a1a;letter-spacing:-0.736px;">Feedback</div>
<div class="a" style="left:1570.5px;top:1006.2px;width:109.5px;height:17.6px;background:#35c46e;border-radius:2px;"></div>
<div class="t" style="left:1576px;top:1009px;font-size:12.5px;color:#10281a;letter-spacing:-0.412px;">Upgrade to Pro</div>
<div class="a" style="left:1683px;top:1006.2px;width:119px;height:17.6px;background:#b48cf0;border-radius:2px;"></div>
<div class="t" style="left:1688.5px;top:1009px;font-size:12.5px;color:#241838;letter-spacing:-0.38px;">Update Available</div>
<div class="a" style="left:1805px;top:1006.2px;width:106.5px;height:17.6px;background:#3fb2f0;border-radius:2px;"></div>
<div class="t" style="left:1810.5px;top:1009px;font-size:12.5px;color:#0e2234;letter-spacing:-0.539px;">Tips and Tricks</div>
<svg style="left:1549px;top:1007px;" width="13" height="16" viewBox="0 0 13 16"><path d="M1.5 1.5 H8 L11 4.5 V14.5 H1.5 Z" fill="#f4f4f4"/><path d="M3.5 11 L9 5.5 L10.5 7 L5 12.5 Z" fill="#f07040"/></svg>
<svg style="left:1659px;top:1008px;" width="16" height="14" viewBox="0 0 16 14"><ellipse cx="4.5" cy="8" rx="3.4" ry="4.5" fill="#f5c518"/><ellipse cx="11.5" cy="8" rx="3.4" ry="4.5" fill="#f5c518"/></svg>
<svg style="left:1781px;top:1008px;" width="15" height="15" viewBox="0 0 15 15"><circle cx="7.5" cy="7.5" r="6.3" fill="#f5b83a"/><path d="M1.5 3.5 L5.5 1.5 M9.5 13.5 L13.5 10.5 M2.5 11.5 L4.5 13.5" stroke="#e04090" stroke-width="1.5"/><circle cx="5" cy="6.5" r="1" fill="#333"/><circle cx="10" cy="6.5" r="1" fill="#333"/></svg>
<svg style="left:1890px;top:1007px;" width="15" height="16" viewBox="0 0 15 16"><path d="M3.5 12 L11.5 3 L13.5 2 L12.5 4 L4.5 13 Z" fill="#eee"/><path d="M3 13.5 L1.5 15 M4.5 12.5 L3 14" stroke="#f07040" stroke-width="1.5"/><circle cx="10" cy="5.5" r="1.1" fill="#3fb2f0"/></svg>
</body></html>
